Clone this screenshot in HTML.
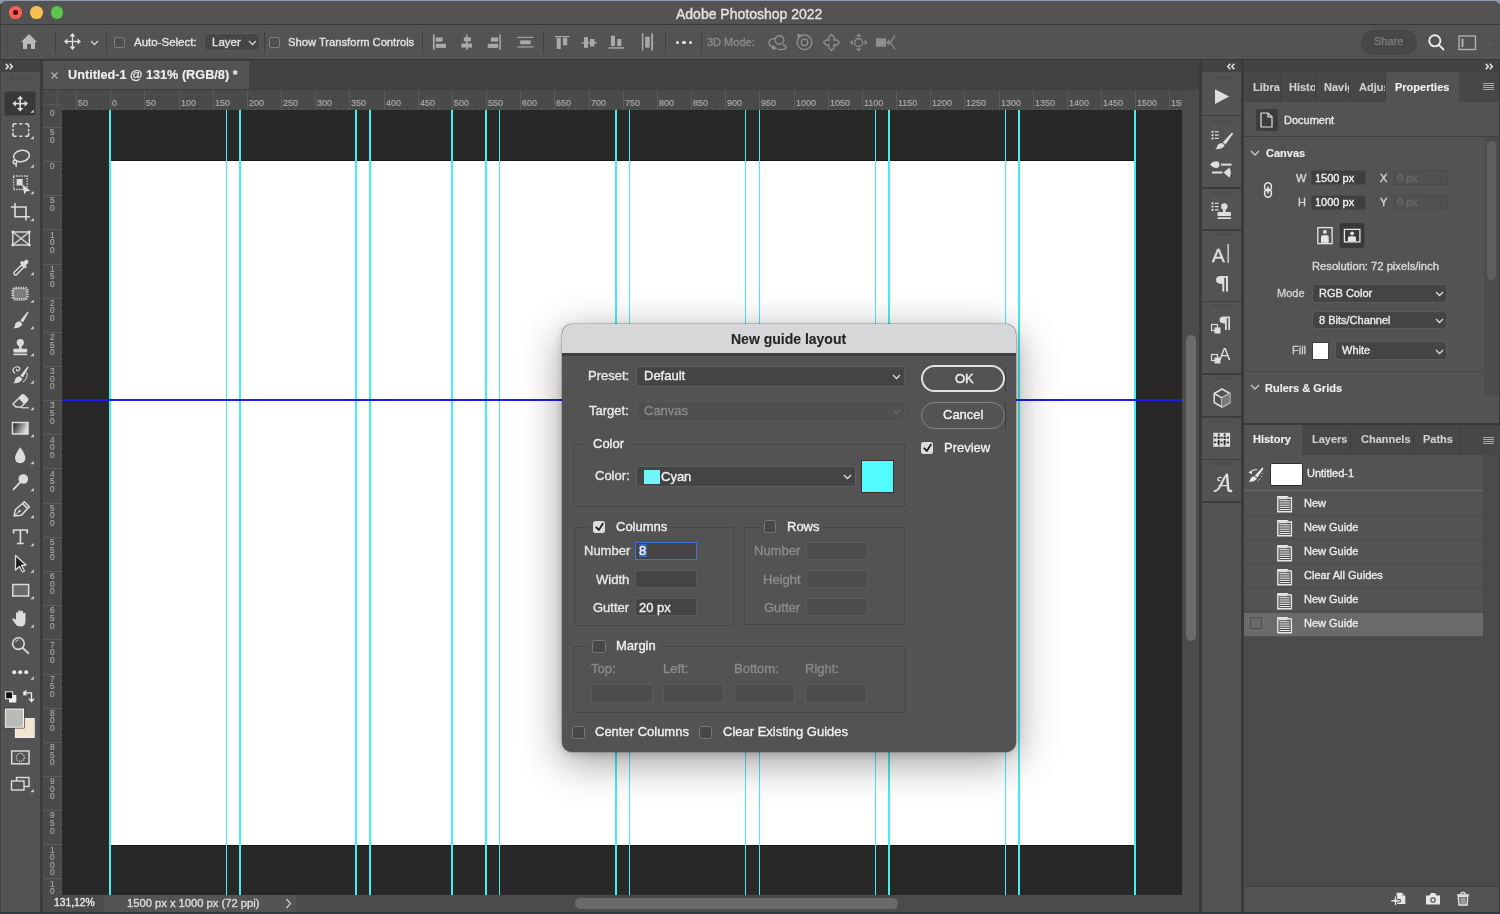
<!DOCTYPE html><html><head><meta charset="utf-8"><style>
*{box-sizing:border-box;margin:0;padding:0}
html,body{width:1500px;height:914px;overflow:hidden}
body{background:#2b3a43;font-family:"Liberation Sans", sans-serif;position:relative;color:#e6e6e6}
.a{position:absolute}
.t{position:absolute;white-space:pre;line-height:1;will-change:transform}
svg{position:absolute;overflow:visible}
</style></head><body>
<div class="a" style="left:0px;top:0px;width:1500px;height:4px;background:#8e9bae;"></div><div class="a" style="left:0px;top:1px;width:1500px;height:911px;background:#535353;border-radius:6px 6px 0 0;"></div><div class="a" style="left:0px;top:24px;width:1500px;height:1px;background:#393939;"></div><div class="a" style="left:0px;top:6px;width:1px;height:54px;background:#404040;"></div><div class="a" style="left:9.3px;top:6.2px;width:12.6px;height:12.6px;border-radius:50%;background:#fd5f58"></div><div class="a" style="left:30.2px;top:6.2px;width:12.6px;height:12.6px;border-radius:50%;background:#f6bf4f"></div><div class="a" style="left:50.900000000000006px;top:6.2px;width:12.6px;height:12.6px;border-radius:50%;background:#5bc84b"></div><div class="a" style="left:13.3px;top:10.2px;width:4.6px;height:4.6px;border-radius:50%;background:#4a0202"></div><div class="t" style="left:676.00px;top:6.96px;font-size:14px;color:#e4e4e4;font-weight:400;-webkit-text-stroke:0.35px #e4e4e4;">Adobe Photoshop 2022</div><div class="a" style="left:0px;top:59px;width:1500px;height:1.5px;background:#363636;"></div><div class="a" style="left:6px;top:32px;width:2px;height:21px;background:repeating-linear-gradient(#474747 0 1px,transparent 1px 2px)"></div><div class="a" style="left:55px;top:31px;width:1px;height:23px;background:#404040;"></div><div class="a" style="left:106px;top:31px;width:1px;height:23px;background:#404040;"></div><div class="a" style="left:264px;top:31px;width:1px;height:23px;background:#404040;"></div><div class="a" style="left:422px;top:31px;width:1px;height:23px;background:#404040;"></div><div class="a" style="left:543px;top:31px;width:1px;height:23px;background:#404040;"></div><div class="a" style="left:665px;top:31px;width:1px;height:23px;background:#404040;"></div><div class="a" style="left:701px;top:31px;width:1px;height:23px;background:#404040;"></div><svg style="left:20px;top:33px;" width="18" height="17" viewBox="0 0 18 17"><path d="M9 1 L1 9 L3 9 L3 16 L7 16 L7 11 L11 11 L11 16 L15 16 L15 9 L17 9 Z" fill="#b9b9b9"/></svg><svg style="left:64px;top:33px;" width="17" height="17" viewBox="0 0 17 17"><g stroke="#e0e0e0" stroke-width="1.3" fill="#e0e0e0"><line x1="8.5" y1="2" x2="8.5" y2="15"/><line x1="2" y1="8.5" x2="15" y2="8.5"/></g><g fill="#e0e0e0"><path d="M8.5 0 L11.5 3.5 L5.5 3.5Z"/><path d="M8.5 17 L11.5 13.5 L5.5 13.5Z"/><path d="M0 8.5 L3.5 5.5 L3.5 11.5Z"/><path d="M17 8.5 L13.5 5.5 L13.5 11.5Z"/></g></svg><svg style="left:90px;top:40px;" width="9" height="6" viewBox="0 0 9 6"><path d="M1 1 L4.5 4.5 L8 1" stroke="#d0d0d0" stroke-width="1.3" fill="none"/></svg><div class="a" style="left:114px;top:37px;width:11px;height:11px;background:#4e4e4e;border:1.3px solid #7d7d7d;border-radius:2px;"></div><div class="t" style="left:133.50px;top:36.65px;font-size:11.5px;color:#e2e2e2;font-weight:400;-webkit-text-stroke:0.35px #e2e2e2;">Auto-Select:</div><div class="a" style="left:204px;top:32.8px;width:56px;height:18.6px;background:#464646;border:1.3px solid #5a5a5a;border-radius:3.5px;"></div><div class="t" style="left:211.50px;top:37.05px;font-size:11.5px;color:#e2e2e2;font-weight:400;-webkit-text-stroke:0.35px #e2e2e2;">Layer</div><svg style="left:248px;top:40px;" width="9" height="6" viewBox="0 0 9 6"><path d="M1 1 L4.5 4.5 L8 1" stroke="#d0d0d0" stroke-width="1.3" fill="none"/></svg><div class="a" style="left:269px;top:37px;width:11px;height:11px;background:#4e4e4e;border:1.3px solid #7d7d7d;border-radius:2px;"></div><div class="t" style="left:288.00px;top:36.68px;font-size:11.2px;color:#e2e2e2;font-weight:400;-webkit-text-stroke:0.35px #e2e2e2;">Show Transform Controls</div><div class="a" style="left:675.7px;top:40.6px;width:3.6px;height:3.6px;border-radius:50%;background:#e8e8e8"></div><div class="a" style="left:682.2px;top:40.6px;width:3.6px;height:3.6px;border-radius:50%;background:#e8e8e8"></div><div class="a" style="left:688.7px;top:40.6px;width:3.6px;height:3.6px;border-radius:50%;background:#e8e8e8"></div><div class="t" style="left:707.30px;top:37.21px;font-size:11px;color:#8b8b8b;font-weight:400;-webkit-text-stroke:0.35px #8b8b8b;">3D Mode:</div><svg style="left:0px;top:0px;" width="1500" height="60" viewBox="0 0 1500 60"><rect x="432.9" y="34.5" width="1.80" height="15.30" fill="#a9a9a9"/><rect x="435.8" y="37.5" width="6.80" height="4.10" fill="#a9a9a9"/><rect x="435.8" y="43.8" width="10.20" height="4.10" fill="#a9a9a9"/><rect x="466" y="34.5" width="1.60" height="15.30" fill="#a9a9a9"/><rect x="463.8" y="37.3" width="7.20" height="4.00" fill="#a9a9a9"/><rect x="461.4" y="43.5" width="10.60" height="4.10" fill="#a9a9a9"/><rect x="499.3" y="34.5" width="1.50" height="15.30" fill="#a9a9a9"/><rect x="491" y="37.5" width="7.20" height="4.10" fill="#a9a9a9"/><rect x="487.7" y="43.8" width="10.50" height="4.10" fill="#a9a9a9"/><rect x="517.2" y="36.8" width="16.50" height="1.10" fill="#a9a9a9"/><rect x="520.2" y="40.4" width="10.50" height="3.90" fill="#a9a9a9"/><rect x="517.2" y="46.3" width="16.50" height="1.20" fill="#a9a9a9"/><rect x="554.9" y="36" width="14.50" height="1.20" fill="#a9a9a9"/><rect x="556.7" y="37.8" width="4.10" height="11.20" fill="#a9a9a9"/><rect x="563" y="37.8" width="4.20" height="7.50" fill="#a9a9a9"/><rect x="581.4" y="42.2" width="15.30" height="1.30" fill="#a9a9a9"/><rect x="584" y="37.1" width="4.00" height="10.80" fill="#a9a9a9"/><rect x="590" y="39" width="4.40" height="7.40" fill="#a9a9a9"/><rect x="608.6" y="47.2" width="15.40" height="1.50" fill="#a9a9a9"/><rect x="610.9" y="35.6" width="4.10" height="10.40" fill="#a9a9a9"/><rect x="617.2" y="39" width="4.10" height="7.00" fill="#a9a9a9"/><rect x="641.9" y="33.4" width="1.50" height="17.10" fill="#a9a9a9"/><rect x="651.2" y="33.4" width="1.90" height="17.10" fill="#a9a9a9"/><rect x="645.2" y="36.7" width="4.50" height="10.90" fill="#a9a9a9"/><g fill="none" stroke="#8e8e8e" stroke-width="1.4"><circle cx="779.5" cy="40" r="4.3"/><path d="M775 38.3 Q768.5 39 769 43.5 Q770 47.3 775.5 47.5" /><path d="M783 44.5 Q786.5 46 785.8 48.2 Q784.5 50 778 49.5"/><circle cx="804.5" cy="42.3" r="7.3"/><circle cx="804.5" cy="42.3" r="3.2"/></g><path d="M772.5 44.8 L777.5 49 L771.8 49.8 Z" fill="#8e8e8e"/><path d="M797 33.8 L801.5 34.5 L798 38.5 Z" fill="#8e8e8e"/><g fill="none" stroke="#8e8e8e" stroke-width="1.3"><path d="M831.5 34.5 L834 37 L834 40 L837 40 L839.5 42.5 L837 45 L834 45 L834 48 L831.5 50.5 L829 48 L829 45 L826 45 L823.5 42.5 L826 40 L829 40 L829 37 Z"/></g><g fill="none" stroke="#8e8e8e" stroke-width="1.3"><circle cx="858.7" cy="42.5" r="4"/></g><g fill="#8e8e8e"><path d="M858.7 33.5 L861.5 36.5 L856 36.5 Z M858.7 51.5 L861.5 48.5 L856 48.5 Z M849.8 42.5 L852.8 39.7 L852.8 45.3 Z M867.6 42.5 L864.6 39.7 L864.6 45.3 Z"/></g><rect x="876" y="38.3" width="10" height="8.4" fill="#8e8e8e"/><path d="M886 42.5 L889.5 39.5 L889.5 45.5 Z" fill="#8e8e8e"/><path d="M895 35.5 L890.5 42.5 L895 49.5" fill="none" stroke="#8e8e8e" stroke-width="1.3"/></svg><div class="a" style="left:1361px;top:29.5px;width:55.5px;height:25px;background:#474747;border-radius:12.5px;"></div><div class="t" style="left:1374.00px;top:36.21px;font-size:11px;color:#7b7b7b;font-weight:400;-webkit-text-stroke:0.35px #7b7b7b;">Share</div><svg style="left:1428px;top:34px;" width="17" height="17" viewBox="0 0 17 17"><circle cx="6.8" cy="6.8" r="5.6" stroke="#ececec" stroke-width="1.9" fill="none"/><line x1="10.8" y1="10.8" x2="15.5" y2="15.5" stroke="#ececec" stroke-width="1.8" stroke-linecap="round"/></svg><svg style="left:1458px;top:35px;" width="19" height="16" viewBox="0 0 19 16"><rect x="1" y="1" width="16.5" height="13.5" stroke="#b0b0b0" stroke-width="1.4" fill="none"/><rect x="3.5" y="3.5" width="2" height="8.5" fill="#b0b0b0"/></svg><svg style="left:1486px;top:41px;" width="8" height="5" viewBox="0 0 8 5"><path d="M1 1 L4 4 L7 1" stroke="#666" stroke-width="1" fill="none"/></svg><div class="a" style="left:0px;top:60px;width:40px;height:12px;background:#434343;"></div><svg style="left:5px;top:63px;" width="9" height="7" viewBox="0 0 9 7"><path d="M0.8 0.8 L3.3 3.5 L0.8 6.2 M4.8 0.8 L7.3 3.5 L4.8 6.2" fill="none" stroke="#e8e8e8" stroke-width="1.5"/></svg><div class="a" style="left:40px;top:60px;width:3px;height:852px;background:#3c3c3c;"></div><div class="a" style="left:0px;top:60px;width:1px;height:852px;background:#444444;"></div><div class="a" style="left:10px;top:77px;width:21px;height:3px;background:repeating-linear-gradient(90deg,#464646 0 1px,transparent 1px 2px)"></div><div class="a" style="left:4.1px;top:90.8px;width:31.8px;height:24.8px;background:#383838;border:1px solid #464646;border-radius:2px;"></div><svg style="left:0;top:0" width="40" height="914" viewBox="0 0 40 914"><g fill="#dcdcdc" stroke="#dcdcdc"><line x1="20.2" y1="97.6" x2="20.2" y2="109.6" stroke-width="1.6"/><line x1="14.2" y1="103.6" x2="26.2" y2="103.6" stroke-width="1.6"/>
<path d="M20.2 95.8 L23.4 99.19999999999999 L17 99.19999999999999 Z M20.2 111.39999999999999 L23.4 108.0 L17 108.0 Z M12.4 103.6 L15.8 100.39999999999999 L15.8 106.8 Z M28 103.6 L24.6 100.39999999999999 L24.6 106.8 Z" stroke="none"/></g><path d="M33.8 112.8 L33.8 109.39999999999999 L30.4 112.8 Z" fill="#cfcfcf"/><g fill="none" stroke="#dcdcdc" stroke-width="1.6"><path d="M13 127.3 L13 125.6 Q13 123.8 14.8 123.8 L16.6 123.8"/><path d="M25 123.8 L26.8 123.8 Q28.6 123.8 28.6 125.6 L28.6 127.3"/><path d="M13 132.8 L13 134.5 Q13 136.3 14.8 136.3 L16.6 136.3"/><path d="M25 136.3 L26.8 136.3 Q28.6 136.3 28.6 134.5 L28.6 132.8"/><path d="M19.2 123.8 L22.4 123.8 M19.2 136.3 L22.4 136.3 M13 129 L13 131.2 M28.6 129 L28.6 131.2"/></g><path d="M33.8 139.2 L33.8 135.8 L30.4 139.2 Z" fill="#cfcfcf"/><ellipse cx="21.5" cy="156" rx="8" ry="5.6" fill="none" stroke="#dcdcdc" stroke-width="1.5" transform="rotate(-12 21.5 156)"/><circle cx="15" cy="162" r="1.8" fill="none" stroke="#dcdcdc" stroke-width="1.4"/><path d="M15.5 163.5 Q17 165.5 16 167" fill="none" stroke="#dcdcdc" stroke-width="1.4"/><path d="M33.8 167.7 L33.8 164.3 L30.4 167.7 Z" fill="#cfcfcf"/><rect x="13.6" y="176" width="13.5" height="13.5" fill="none" stroke="#dcdcdc" stroke-width="1.3" stroke-dasharray="1.4 1.2"/><rect x="16.6" y="179" width="6" height="6.5" fill="#dcdcdc"/><path d="M22 184 L30.5 191 L26.5 191.2 L24.5 194.5 Z" fill="#dcdcdc"/><path d="M33.8 194.2 L33.8 190.8 L30.4 194.2 Z" fill="#cfcfcf"/><path d="M10.8 207 L26 207 L26 220.4 M15 203 L15 216.8 L30 216.8" fill="none" stroke="#dcdcdc" stroke-width="1.6"/><path d="M33.8 221.2 L33.8 217.8 L30.4 221.2 Z" fill="#cfcfcf"/><rect x="12.8" y="232" width="16.5" height="13" fill="none" stroke="#dcdcdc" stroke-width="1.4"/><path d="M12.8 232 L29.3 245 M29.3 232 L12.8 245" stroke="#dcdcdc" stroke-width="1.2"/><g fill="#dcdcdc"><circle cx="12.8" cy="232" r="1.4"/><circle cx="29.3" cy="232" r="1.4"/><circle cx="12.8" cy="245" r="1.4"/><circle cx="29.3" cy="245" r="1.4"/></g><path d="M14 272.5 L21.5 265 L23.8 267.3 L16.3 274.8 Q13.5 275.6 14 272.5 Z" fill="none" stroke="#dcdcdc" stroke-width="1.4"/><path d="M20 263 L25.5 268.5 L27 267 L25.6 265.6 L28.2 263 Q29 260 26 259.5 L23.4 262 L22 260.6 Z" fill="#dcdcdc"/><path d="M33.8 275.2 L33.8 271.8 L30.4 275.2 Z" fill="#cfcfcf"/><rect x="12.8" y="288" width="14.6" height="11.4" rx="3" fill="#7d7d7d" stroke="#dcdcdc" stroke-width="2.6" stroke-dasharray="1.2 1.1"/><path d="M33.8 302.8 L33.8 299.40000000000003 L30.4 302.8 Z" fill="#cfcfcf"/><path d="M27.6 311.6 Q28.6 311.8 28.4 312.8 L22.9 322.6 L20.4 320.6 Z" fill="#dcdcdc"/><path d="M19.9 321.2 Q15.2 321.8 15 325.2 Q14.8 327 13.3 328.2 Q19.6 329 22.4 324.2 Z" fill="#dcdcdc"/><path d="M33.8 329.2 L33.8 325.8 L30.4 329.2 Z" fill="#cfcfcf"/><circle cx="20.3" cy="342.6" r="3.6" fill="#dcdcdc"/><rect x="19" y="345" width="2.6" height="4" fill="#dcdcdc"/><rect x="13.4" y="348.8" width="13.8" height="3.6" rx="0.8" fill="#dcdcdc"/><rect x="13.4" y="353.6" width="13.8" height="1.6" fill="#dcdcdc"/><path d="M33.8 356.2 L33.8 352.8 L30.4 356.2 Z" fill="#cfcfcf"/><path d="M15.2 373.3 Q12.3 371.5 13.2 369 Q14.5 366.5 17.8 366.8 Q20.5 367.3 19.5 369.8 Q18.5 371.5 16.8 370.6 Q16 369.6 17.2 369.1" fill="none" stroke="#dcdcdc" stroke-width="1.2"/><path d="M27.6 366.6 Q28.6 366.8 28.4 367.8 L22.9 377.6 L20.4 375.6 Z" fill="#dcdcdc"/><path d="M19.9 376.2 Q15.2 376.8 15 380.2 Q14.8 382 13.3 383.2 Q19.6 384 22.4 379.2 Z" fill="#dcdcdc"/><path d="M26.8 372.5 Q28.3 378.3 22.8 382.3" fill="none" stroke="#dcdcdc" stroke-width="1"/><path d="M33.8 383.7 L33.8 380.3 L30.4 383.7 Z" fill="#cfcfcf"/><path d="M13 404 L21.5 395.5 Q23 394 24.5 395.5 L27 398 Q28.5 399.5 27 401 L21 407 L16 407 Z" fill="none" stroke="#dcdcdc" stroke-width="1.4"/><path d="M21.5 395.5 Q23 394 24.5 395.5 L27 398 Q28.5 399.5 27 401 L24 404 L18.5 398.5 Z" fill="#dcdcdc"/><line x1="21" y1="407.8" x2="28.8" y2="407.8" stroke="#dcdcdc" stroke-width="1.2"/><path d="M33.8 410.2 L33.8 406.8 L30.4 410.2 Z" fill="#cfcfcf"/><defs><linearGradient id="gr" x1="0" y1="0" x2="1" y2="0.4"><stop offset="0" stop-color="#111"/><stop offset="1" stop-color="#ddd"/></linearGradient></defs><rect x="12.5" y="422.5" width="15.5" height="11.5" fill="url(#gr)" stroke="#dcdcdc" stroke-width="1.5"/><path d="M33.8 437.2 L33.8 433.8 L30.4 437.2 Z" fill="#cfcfcf"/><path d="M20.2 447.3 Q15 454.5 15 457.8 Q15 463.2 20.2 463.2 Q25.4 463.2 25.4 457.8 Q25.4 454.5 20.2 447.3 Z" fill="#dcdcdc"/><path d="M33.8 464.2 L33.8 460.8 L30.4 464.2 Z" fill="#cfcfcf"/><circle cx="23.3" cy="479" r="4.8" fill="#dcdcdc"/><line x1="19.8" y1="482.6" x2="13.5" y2="489.4" stroke="#dcdcdc" stroke-width="1.8" stroke-linecap="round"/><path d="M33.8 491.2 L33.8 487.8 L30.4 491.2 Z" fill="#cfcfcf"/><path d="M14 516 L15.5 509.5 L22.5 503.5 L27.5 508.5 L21.5 515.2 Z" fill="none" stroke="#dcdcdc" stroke-width="1.5" stroke-linejoin="round"/><path d="M22.5 503.5 L24.3 501.7 L29.3 506.7 L27.5 508.5" fill="none" stroke="#dcdcdc" stroke-width="1.5"/><circle cx="19.5" cy="511" r="1.2" fill="#dcdcdc"/><line x1="14" y1="516" x2="19" y2="511.5" stroke="#dcdcdc" stroke-width="1"/><path d="M33.8 518.2 L33.8 514.8 L30.4 518.2 Z" fill="#cfcfcf"/><path d="M13.6 533.5 L13.6 530 L27.2 530 L27.2 533.5 M20.4 530 L20.4 543.5 M17 543.5 L23.8 543.5" fill="none" stroke="#dcdcdc" stroke-width="1.7"/><path d="M33.8 546.2 L33.8 542.8 L30.4 546.2 Z" fill="#cfcfcf"/><path d="M15.5 555.5 L26 565 L21.5 565.5 L24.5 571 L22.5 572 L19.5 566.5 L15.5 570 Z" fill="#1e1e1e" stroke="#dcdcdc" stroke-width="1.3" stroke-linejoin="round"/><path d="M33.8 572.7 L33.8 569.3 L30.4 572.7 Z" fill="#cfcfcf"/><rect x="12.8" y="584.5" width="15.8" height="11.5" fill="#6a6a6a" stroke="#dcdcdc" stroke-width="1.5"/><path d="M33.8 599.2 L33.8 595.8 L30.4 599.2 Z" fill="#cfcfcf"/><path d="M16 620 L16 613.5 Q16 612.2 17.2 612.2 Q18.3 612.2 18.3 613.5 L18.3 618 L18.3 611.5 Q18.3 610.3 19.5 610.3 Q20.7 610.3 20.7 611.5 L20.7 618 L20.7 612 Q20.7 610.8 21.9 610.8 Q23.1 610.8 23.1 612 L23.1 618.5 L23.1 614 Q23.1 612.8 24.3 612.8 Q25.5 612.8 25.5 614 L25.5 621 Q25.5 626.5 20.5 626.5 Q17 626.5 15.5 624 L12.5 619.8 Q12 618.5 13.2 618.3 Q14.5 618.2 16 620 Z" fill="#dcdcdc"/><path d="M33.8 627.7 L33.8 624.3 L30.4 627.7 Z" fill="#cfcfcf"/><circle cx="18.4" cy="643.6" r="5.8" fill="none" stroke="#dcdcdc" stroke-width="1.6"/><line x1="22.6" y1="647.8" x2="28.3" y2="653.2" stroke="#dcdcdc" stroke-width="1.8" stroke-linecap="round"/><path d="M15.5 642 Q16.5 640 18.6 639.8" fill="none" stroke="#dcdcdc" stroke-width="1"/><g fill="#e8e8e8"><circle cx="14.2" cy="672.3" r="2"/><circle cx="20.2" cy="672.3" r="2"/><circle cx="26.2" cy="672.3" r="2"/></g><path d="M33.8 679.7 L33.8 676.3 L30.4 679.7 Z" fill="#cfcfcf"/><rect x="9" y="695" width="7.3" height="7.5" fill="#f0f0f0"/><rect x="5.6" y="691.8" width="7" height="7" fill="#111" stroke="#f0f0f0" stroke-width="1"/><path d="M24 695.5 L24 692.8 L31.5 692.8 L31.5 701 M29 698.6 L31.5 701.6 L34 698.6 M26.5 690.5 L23.6 692.8 L26.5 695.2" fill="none" stroke="#f0f0f0" stroke-width="1.3"/><rect x="15" y="718.2" width="19.6" height="19.6" fill="#f2e5d0" stroke="#f4f4f4" stroke-width="1.4"/><rect x="14.5" y="717.7" width="20.6" height="20.6" fill="none" stroke="#222" stroke-width="0.6"/><rect x="5" y="708.8" width="18.6" height="18.6" fill="#b9bbb6" stroke="#f4f4f4" stroke-width="1.4"/><rect x="4.3" y="708.1" width="20" height="20" fill="none" stroke="#222" stroke-width="0.6"/><rect x="11.7" y="751" width="17.3" height="12.8" fill="none" stroke="#dcdcdc" stroke-width="1.5"/><circle cx="20.3" cy="757.4" r="4" fill="none" stroke="#dcdcdc" stroke-width="1.2" stroke-dasharray="1.2 1"/><rect x="16.5" y="777.5" width="12.5" height="9" fill="#535353" stroke="#dcdcdc" stroke-width="1.4"/><rect x="11.5" y="781" width="12.5" height="9" fill="#535353" stroke="#dcdcdc" stroke-width="1.4"/><path d="M33.8 792.2 L33.8 788.8 L30.4 792.2 Z" fill="#cfcfcf"/></svg><div class="a" style="left:43px;top:60px;width:1156px;height:30px;background:#424242;"></div><div class="a" style="left:43px;top:61px;width:205.5px;height:28.3px;background:#535353;"></div><div class="a" style="left:43px;top:89.2px;width:1139px;height:1.2px;background:#3d3d3d;"></div><svg style="left:50.5px;top:72px;" width="7" height="7" viewBox="0 0 7 7"><path d="M0.5 0.5 L6.5 6.5 M6.5 0.5 L0.5 6.5" stroke="#b5b5b5" stroke-width="1.1"/></svg><div class="t" style="left:67.80px;top:68.81px;font-size:12.7px;color:#f0f0f0;font-weight:700;-webkit-text-stroke:0.12px #f0f0f0;">Untitled-1 @ 131% (RGB/8) *</div><div class="a" style="left:43px;top:90px;width:1139px;height:20px;background:#4a4a4a;"></div><div class="a" style="left:43px;top:110px;width:19px;height:785px;background:#4a4a4a;"></div><div class="a" style="left:62px;top:110px;width:1120px;height:785px;background:#282828;"></div><div class="a" style="left:109px;top:160px;width:1027px;height:686px;background:#181818;"></div><div class="a" style="left:110px;top:161px;width:1025px;height:684px;background:#ffffff;"></div><div class="a" style="left:76px;top:90px;width:1px;height:20px;background:#5b5b5b;"></div><div class="t" style="left:78.00px;top:97.84px;font-size:9px;color:#acacac;font-weight:400;-webkit-text-stroke:0.15px #acacac;transform:scaleY(1.1);transform-origin:0 0;">50</div><div class="a" style="left:110px;top:90px;width:1px;height:20px;background:#5b5b5b;"></div><div class="t" style="left:112.00px;top:97.84px;font-size:9px;color:#acacac;font-weight:400;-webkit-text-stroke:0.15px #acacac;transform:scaleY(1.1);transform-origin:0 0;">0</div><div class="a" style="left:144px;top:90px;width:1px;height:20px;background:#5b5b5b;"></div><div class="t" style="left:146.00px;top:97.84px;font-size:9px;color:#acacac;font-weight:400;-webkit-text-stroke:0.15px #acacac;transform:scaleY(1.1);transform-origin:0 0;">50</div><div class="a" style="left:179px;top:90px;width:1px;height:20px;background:#5b5b5b;"></div><div class="t" style="left:181.00px;top:97.84px;font-size:9px;color:#acacac;font-weight:400;-webkit-text-stroke:0.15px #acacac;transform:scaleY(1.1);transform-origin:0 0;">100</div><div class="a" style="left:213px;top:90px;width:1px;height:20px;background:#5b5b5b;"></div><div class="t" style="left:215.00px;top:97.84px;font-size:9px;color:#acacac;font-weight:400;-webkit-text-stroke:0.15px #acacac;transform:scaleY(1.1);transform-origin:0 0;">150</div><div class="a" style="left:247px;top:90px;width:1px;height:20px;background:#5b5b5b;"></div><div class="t" style="left:249.00px;top:97.84px;font-size:9px;color:#acacac;font-weight:400;-webkit-text-stroke:0.15px #acacac;transform:scaleY(1.1);transform-origin:0 0;">200</div><div class="a" style="left:281px;top:90px;width:1px;height:20px;background:#5b5b5b;"></div><div class="t" style="left:283.00px;top:97.84px;font-size:9px;color:#acacac;font-weight:400;-webkit-text-stroke:0.15px #acacac;transform:scaleY(1.1);transform-origin:0 0;">250</div><div class="a" style="left:315px;top:90px;width:1px;height:20px;background:#5b5b5b;"></div><div class="t" style="left:317.00px;top:97.84px;font-size:9px;color:#acacac;font-weight:400;-webkit-text-stroke:0.15px #acacac;transform:scaleY(1.1);transform-origin:0 0;">300</div><div class="a" style="left:349px;top:90px;width:1px;height:20px;background:#5b5b5b;"></div><div class="t" style="left:351.00px;top:97.84px;font-size:9px;color:#acacac;font-weight:400;-webkit-text-stroke:0.15px #acacac;transform:scaleY(1.1);transform-origin:0 0;">350</div><div class="a" style="left:384px;top:90px;width:1px;height:20px;background:#5b5b5b;"></div><div class="t" style="left:386.00px;top:97.84px;font-size:9px;color:#acacac;font-weight:400;-webkit-text-stroke:0.15px #acacac;transform:scaleY(1.1);transform-origin:0 0;">400</div><div class="a" style="left:418px;top:90px;width:1px;height:20px;background:#5b5b5b;"></div><div class="t" style="left:420.00px;top:97.84px;font-size:9px;color:#acacac;font-weight:400;-webkit-text-stroke:0.15px #acacac;transform:scaleY(1.1);transform-origin:0 0;">450</div><div class="a" style="left:452px;top:90px;width:1px;height:20px;background:#5b5b5b;"></div><div class="t" style="left:454.00px;top:97.84px;font-size:9px;color:#acacac;font-weight:400;-webkit-text-stroke:0.15px #acacac;transform:scaleY(1.1);transform-origin:0 0;">500</div><div class="a" style="left:486px;top:90px;width:1px;height:20px;background:#5b5b5b;"></div><div class="t" style="left:488.00px;top:97.84px;font-size:9px;color:#acacac;font-weight:400;-webkit-text-stroke:0.15px #acacac;transform:scaleY(1.1);transform-origin:0 0;">550</div><div class="a" style="left:520px;top:90px;width:1px;height:20px;background:#5b5b5b;"></div><div class="t" style="left:522.00px;top:97.84px;font-size:9px;color:#acacac;font-weight:400;-webkit-text-stroke:0.15px #acacac;transform:scaleY(1.1);transform-origin:0 0;">600</div><div class="a" style="left:554px;top:90px;width:1px;height:20px;background:#5b5b5b;"></div><div class="t" style="left:556.00px;top:97.84px;font-size:9px;color:#acacac;font-weight:400;-webkit-text-stroke:0.15px #acacac;transform:scaleY(1.1);transform-origin:0 0;">650</div><div class="a" style="left:589px;top:90px;width:1px;height:20px;background:#5b5b5b;"></div><div class="t" style="left:591.00px;top:97.84px;font-size:9px;color:#acacac;font-weight:400;-webkit-text-stroke:0.15px #acacac;transform:scaleY(1.1);transform-origin:0 0;">700</div><div class="a" style="left:623px;top:90px;width:1px;height:20px;background:#5b5b5b;"></div><div class="t" style="left:625.00px;top:97.84px;font-size:9px;color:#acacac;font-weight:400;-webkit-text-stroke:0.15px #acacac;transform:scaleY(1.1);transform-origin:0 0;">750</div><div class="a" style="left:657px;top:90px;width:1px;height:20px;background:#5b5b5b;"></div><div class="t" style="left:659.00px;top:97.84px;font-size:9px;color:#acacac;font-weight:400;-webkit-text-stroke:0.15px #acacac;transform:scaleY(1.1);transform-origin:0 0;">800</div><div class="a" style="left:691px;top:90px;width:1px;height:20px;background:#5b5b5b;"></div><div class="t" style="left:693.00px;top:97.84px;font-size:9px;color:#acacac;font-weight:400;-webkit-text-stroke:0.15px #acacac;transform:scaleY(1.1);transform-origin:0 0;">850</div><div class="a" style="left:725px;top:90px;width:1px;height:20px;background:#5b5b5b;"></div><div class="t" style="left:727.00px;top:97.84px;font-size:9px;color:#acacac;font-weight:400;-webkit-text-stroke:0.15px #acacac;transform:scaleY(1.1);transform-origin:0 0;">900</div><div class="a" style="left:759px;top:90px;width:1px;height:20px;background:#5b5b5b;"></div><div class="t" style="left:761.00px;top:97.84px;font-size:9px;color:#acacac;font-weight:400;-webkit-text-stroke:0.15px #acacac;transform:scaleY(1.1);transform-origin:0 0;">950</div><div class="a" style="left:794px;top:90px;width:1px;height:20px;background:#5b5b5b;"></div><div class="t" style="left:796.00px;top:97.84px;font-size:9px;color:#acacac;font-weight:400;-webkit-text-stroke:0.15px #acacac;transform:scaleY(1.1);transform-origin:0 0;">1000</div><div class="a" style="left:828px;top:90px;width:1px;height:20px;background:#5b5b5b;"></div><div class="t" style="left:830.00px;top:97.84px;font-size:9px;color:#acacac;font-weight:400;-webkit-text-stroke:0.15px #acacac;transform:scaleY(1.1);transform-origin:0 0;">1050</div><div class="a" style="left:862px;top:90px;width:1px;height:20px;background:#5b5b5b;"></div><div class="t" style="left:864.00px;top:97.84px;font-size:9px;color:#acacac;font-weight:400;-webkit-text-stroke:0.15px #acacac;transform:scaleY(1.1);transform-origin:0 0;">1100</div><div class="a" style="left:896px;top:90px;width:1px;height:20px;background:#5b5b5b;"></div><div class="t" style="left:898.00px;top:97.84px;font-size:9px;color:#acacac;font-weight:400;-webkit-text-stroke:0.15px #acacac;transform:scaleY(1.1);transform-origin:0 0;">1150</div><div class="a" style="left:930px;top:90px;width:1px;height:20px;background:#5b5b5b;"></div><div class="t" style="left:932.00px;top:97.84px;font-size:9px;color:#acacac;font-weight:400;-webkit-text-stroke:0.15px #acacac;transform:scaleY(1.1);transform-origin:0 0;">1200</div><div class="a" style="left:964px;top:90px;width:1px;height:20px;background:#5b5b5b;"></div><div class="t" style="left:966.00px;top:97.84px;font-size:9px;color:#acacac;font-weight:400;-webkit-text-stroke:0.15px #acacac;transform:scaleY(1.1);transform-origin:0 0;">1250</div><div class="a" style="left:999px;top:90px;width:1px;height:20px;background:#5b5b5b;"></div><div class="t" style="left:1001.00px;top:97.84px;font-size:9px;color:#acacac;font-weight:400;-webkit-text-stroke:0.15px #acacac;transform:scaleY(1.1);transform-origin:0 0;">1300</div><div class="a" style="left:1033px;top:90px;width:1px;height:20px;background:#5b5b5b;"></div><div class="t" style="left:1035.00px;top:97.84px;font-size:9px;color:#acacac;font-weight:400;-webkit-text-stroke:0.15px #acacac;transform:scaleY(1.1);transform-origin:0 0;">1350</div><div class="a" style="left:1067px;top:90px;width:1px;height:20px;background:#5b5b5b;"></div><div class="t" style="left:1069.00px;top:97.84px;font-size:9px;color:#acacac;font-weight:400;-webkit-text-stroke:0.15px #acacac;transform:scaleY(1.1);transform-origin:0 0;">1400</div><div class="a" style="left:1101px;top:90px;width:1px;height:20px;background:#5b5b5b;"></div><div class="t" style="left:1103.00px;top:97.84px;font-size:9px;color:#acacac;font-weight:400;-webkit-text-stroke:0.15px #acacac;transform:scaleY(1.1);transform-origin:0 0;">1450</div><div class="a" style="left:1135px;top:90px;width:1px;height:20px;background:#5b5b5b;"></div><div class="t" style="left:1137.00px;top:97.84px;font-size:9px;color:#acacac;font-weight:400;-webkit-text-stroke:0.15px #acacac;transform:scaleY(1.1);transform-origin:0 0;">1500</div><div class="a" style="left:1169px;top:90px;width:1px;height:20px;background:#5b5b5b;"></div><div class="t" style="left:1171.00px;top:97.84px;font-size:9px;color:#acacac;font-weight:400;-webkit-text-stroke:0.15px #acacac;transform:scaleY(1.1);transform-origin:0 0;">1550</div><svg style="left:0px;top:0px;" width="1500" height="914" viewBox="0 0 1500 914"><rect x="62" y="108.3" width="1" height="1.7" fill="#5e5e5e"/><rect x="69" y="108.3" width="1" height="1.7" fill="#5e5e5e"/><rect x="83" y="108.3" width="1" height="1.7" fill="#5e5e5e"/><rect x="90" y="108.3" width="1" height="1.7" fill="#5e5e5e"/><rect x="97" y="108.3" width="1" height="1.7" fill="#5e5e5e"/><rect x="103" y="108.3" width="1" height="1.7" fill="#5e5e5e"/><rect x="117" y="108.3" width="1" height="1.7" fill="#5e5e5e"/><rect x="124" y="108.3" width="1" height="1.7" fill="#5e5e5e"/><rect x="131" y="108.3" width="1" height="1.7" fill="#5e5e5e"/><rect x="138" y="108.3" width="1" height="1.7" fill="#5e5e5e"/><rect x="151" y="108.3" width="1" height="1.7" fill="#5e5e5e"/><rect x="158" y="108.3" width="1" height="1.7" fill="#5e5e5e"/><rect x="165" y="108.3" width="1" height="1.7" fill="#5e5e5e"/><rect x="172" y="108.3" width="1" height="1.7" fill="#5e5e5e"/><rect x="185" y="108.3" width="1" height="1.7" fill="#5e5e5e"/><rect x="192" y="108.3" width="1" height="1.7" fill="#5e5e5e"/><rect x="199" y="108.3" width="1" height="1.7" fill="#5e5e5e"/><rect x="206" y="108.3" width="1" height="1.7" fill="#5e5e5e"/><rect x="220" y="108.3" width="1" height="1.7" fill="#5e5e5e"/><rect x="226" y="108.3" width="1" height="1.7" fill="#5e5e5e"/><rect x="233" y="108.3" width="1" height="1.7" fill="#5e5e5e"/><rect x="240" y="108.3" width="1" height="1.7" fill="#5e5e5e"/><rect x="254" y="108.3" width="1" height="1.7" fill="#5e5e5e"/><rect x="261" y="108.3" width="1" height="1.7" fill="#5e5e5e"/><rect x="267" y="108.3" width="1" height="1.7" fill="#5e5e5e"/><rect x="274" y="108.3" width="1" height="1.7" fill="#5e5e5e"/><rect x="288" y="108.3" width="1" height="1.7" fill="#5e5e5e"/><rect x="295" y="108.3" width="1" height="1.7" fill="#5e5e5e"/><rect x="302" y="108.3" width="1" height="1.7" fill="#5e5e5e"/><rect x="308" y="108.3" width="1" height="1.7" fill="#5e5e5e"/><rect x="322" y="108.3" width="1" height="1.7" fill="#5e5e5e"/><rect x="329" y="108.3" width="1" height="1.7" fill="#5e5e5e"/><rect x="336" y="108.3" width="1" height="1.7" fill="#5e5e5e"/><rect x="343" y="108.3" width="1" height="1.7" fill="#5e5e5e"/><rect x="356" y="108.3" width="1" height="1.7" fill="#5e5e5e"/><rect x="363" y="108.3" width="1" height="1.7" fill="#5e5e5e"/><rect x="370" y="108.3" width="1" height="1.7" fill="#5e5e5e"/><rect x="377" y="108.3" width="1" height="1.7" fill="#5e5e5e"/><rect x="390" y="108.3" width="1" height="1.7" fill="#5e5e5e"/><rect x="397" y="108.3" width="1" height="1.7" fill="#5e5e5e"/><rect x="404" y="108.3" width="1" height="1.7" fill="#5e5e5e"/><rect x="411" y="108.3" width="1" height="1.7" fill="#5e5e5e"/><rect x="425" y="108.3" width="1" height="1.7" fill="#5e5e5e"/><rect x="431" y="108.3" width="1" height="1.7" fill="#5e5e5e"/><rect x="438" y="108.3" width="1" height="1.7" fill="#5e5e5e"/><rect x="445" y="108.3" width="1" height="1.7" fill="#5e5e5e"/><rect x="459" y="108.3" width="1" height="1.7" fill="#5e5e5e"/><rect x="466" y="108.3" width="1" height="1.7" fill="#5e5e5e"/><rect x="472" y="108.3" width="1" height="1.7" fill="#5e5e5e"/><rect x="479" y="108.3" width="1" height="1.7" fill="#5e5e5e"/><rect x="493" y="108.3" width="1" height="1.7" fill="#5e5e5e"/><rect x="500" y="108.3" width="1" height="1.7" fill="#5e5e5e"/><rect x="507" y="108.3" width="1" height="1.7" fill="#5e5e5e"/><rect x="513" y="108.3" width="1" height="1.7" fill="#5e5e5e"/><rect x="527" y="108.3" width="1" height="1.7" fill="#5e5e5e"/><rect x="534" y="108.3" width="1" height="1.7" fill="#5e5e5e"/><rect x="541" y="108.3" width="1" height="1.7" fill="#5e5e5e"/><rect x="548" y="108.3" width="1" height="1.7" fill="#5e5e5e"/><rect x="561" y="108.3" width="1" height="1.7" fill="#5e5e5e"/><rect x="568" y="108.3" width="1" height="1.7" fill="#5e5e5e"/><rect x="575" y="108.3" width="1" height="1.7" fill="#5e5e5e"/><rect x="582" y="108.3" width="1" height="1.7" fill="#5e5e5e"/><rect x="595" y="108.3" width="1" height="1.7" fill="#5e5e5e"/><rect x="602" y="108.3" width="1" height="1.7" fill="#5e5e5e"/><rect x="609" y="108.3" width="1" height="1.7" fill="#5e5e5e"/><rect x="616" y="108.3" width="1" height="1.7" fill="#5e5e5e"/><rect x="630" y="108.3" width="1" height="1.7" fill="#5e5e5e"/><rect x="636" y="108.3" width="1" height="1.7" fill="#5e5e5e"/><rect x="643" y="108.3" width="1" height="1.7" fill="#5e5e5e"/><rect x="650" y="108.3" width="1" height="1.7" fill="#5e5e5e"/><rect x="664" y="108.3" width="1" height="1.7" fill="#5e5e5e"/><rect x="671" y="108.3" width="1" height="1.7" fill="#5e5e5e"/><rect x="677" y="108.3" width="1" height="1.7" fill="#5e5e5e"/><rect x="684" y="108.3" width="1" height="1.7" fill="#5e5e5e"/><rect x="698" y="108.3" width="1" height="1.7" fill="#5e5e5e"/><rect x="705" y="108.3" width="1" height="1.7" fill="#5e5e5e"/><rect x="712" y="108.3" width="1" height="1.7" fill="#5e5e5e"/><rect x="718" y="108.3" width="1" height="1.7" fill="#5e5e5e"/><rect x="732" y="108.3" width="1" height="1.7" fill="#5e5e5e"/><rect x="739" y="108.3" width="1" height="1.7" fill="#5e5e5e"/><rect x="746" y="108.3" width="1" height="1.7" fill="#5e5e5e"/><rect x="753" y="108.3" width="1" height="1.7" fill="#5e5e5e"/><rect x="766" y="108.3" width="1" height="1.7" fill="#5e5e5e"/><rect x="773" y="108.3" width="1" height="1.7" fill="#5e5e5e"/><rect x="780" y="108.3" width="1" height="1.7" fill="#5e5e5e"/><rect x="787" y="108.3" width="1" height="1.7" fill="#5e5e5e"/><rect x="800" y="108.3" width="1" height="1.7" fill="#5e5e5e"/><rect x="807" y="108.3" width="1" height="1.7" fill="#5e5e5e"/><rect x="814" y="108.3" width="1" height="1.7" fill="#5e5e5e"/><rect x="821" y="108.3" width="1" height="1.7" fill="#5e5e5e"/><rect x="835" y="108.3" width="1" height="1.7" fill="#5e5e5e"/><rect x="841" y="108.3" width="1" height="1.7" fill="#5e5e5e"/><rect x="848" y="108.3" width="1" height="1.7" fill="#5e5e5e"/><rect x="855" y="108.3" width="1" height="1.7" fill="#5e5e5e"/><rect x="869" y="108.3" width="1" height="1.7" fill="#5e5e5e"/><rect x="876" y="108.3" width="1" height="1.7" fill="#5e5e5e"/><rect x="882" y="108.3" width="1" height="1.7" fill="#5e5e5e"/><rect x="889" y="108.3" width="1" height="1.7" fill="#5e5e5e"/><rect x="903" y="108.3" width="1" height="1.7" fill="#5e5e5e"/><rect x="910" y="108.3" width="1" height="1.7" fill="#5e5e5e"/><rect x="917" y="108.3" width="1" height="1.7" fill="#5e5e5e"/><rect x="923" y="108.3" width="1" height="1.7" fill="#5e5e5e"/><rect x="937" y="108.3" width="1" height="1.7" fill="#5e5e5e"/><rect x="944" y="108.3" width="1" height="1.7" fill="#5e5e5e"/><rect x="951" y="108.3" width="1" height="1.7" fill="#5e5e5e"/><rect x="958" y="108.3" width="1" height="1.7" fill="#5e5e5e"/><rect x="971" y="108.3" width="1" height="1.7" fill="#5e5e5e"/><rect x="978" y="108.3" width="1" height="1.7" fill="#5e5e5e"/><rect x="985" y="108.3" width="1" height="1.7" fill="#5e5e5e"/><rect x="992" y="108.3" width="1" height="1.7" fill="#5e5e5e"/><rect x="1005" y="108.3" width="1" height="1.7" fill="#5e5e5e"/><rect x="1012" y="108.3" width="1" height="1.7" fill="#5e5e5e"/><rect x="1019" y="108.3" width="1" height="1.7" fill="#5e5e5e"/><rect x="1026" y="108.3" width="1" height="1.7" fill="#5e5e5e"/><rect x="1040" y="108.3" width="1" height="1.7" fill="#5e5e5e"/><rect x="1046" y="108.3" width="1" height="1.7" fill="#5e5e5e"/><rect x="1053" y="108.3" width="1" height="1.7" fill="#5e5e5e"/><rect x="1060" y="108.3" width="1" height="1.7" fill="#5e5e5e"/><rect x="1074" y="108.3" width="1" height="1.7" fill="#5e5e5e"/><rect x="1081" y="108.3" width="1" height="1.7" fill="#5e5e5e"/><rect x="1087" y="108.3" width="1" height="1.7" fill="#5e5e5e"/><rect x="1094" y="108.3" width="1" height="1.7" fill="#5e5e5e"/><rect x="1108" y="108.3" width="1" height="1.7" fill="#5e5e5e"/><rect x="1115" y="108.3" width="1" height="1.7" fill="#5e5e5e"/><rect x="1122" y="108.3" width="1" height="1.7" fill="#5e5e5e"/><rect x="1128" y="108.3" width="1" height="1.7" fill="#5e5e5e"/><rect x="1142" y="108.3" width="1" height="1.7" fill="#5e5e5e"/><rect x="1149" y="108.3" width="1" height="1.7" fill="#5e5e5e"/><rect x="1156" y="108.3" width="1" height="1.7" fill="#5e5e5e"/><rect x="1163" y="108.3" width="1" height="1.7" fill="#5e5e5e"/><rect x="1176" y="108.3" width="1" height="1.7" fill="#5e5e5e"/><rect x="60.3" y="113" width="1.7" height="1" fill="#5e5e5e"/><rect x="60.3" y="120" width="1.7" height="1" fill="#5e5e5e"/><rect x="60.3" y="134" width="1.7" height="1" fill="#5e5e5e"/><rect x="60.3" y="140" width="1.7" height="1" fill="#5e5e5e"/><rect x="60.3" y="147" width="1.7" height="1" fill="#5e5e5e"/><rect x="60.3" y="154" width="1.7" height="1" fill="#5e5e5e"/><rect x="60.3" y="168" width="1.7" height="1" fill="#5e5e5e"/><rect x="60.3" y="175" width="1.7" height="1" fill="#5e5e5e"/><rect x="60.3" y="182" width="1.7" height="1" fill="#5e5e5e"/><rect x="60.3" y="188" width="1.7" height="1" fill="#5e5e5e"/><rect x="60.3" y="202" width="1.7" height="1" fill="#5e5e5e"/><rect x="60.3" y="209" width="1.7" height="1" fill="#5e5e5e"/><rect x="60.3" y="216" width="1.7" height="1" fill="#5e5e5e"/><rect x="60.3" y="222" width="1.7" height="1" fill="#5e5e5e"/><rect x="60.3" y="236" width="1.7" height="1" fill="#5e5e5e"/><rect x="60.3" y="243" width="1.7" height="1" fill="#5e5e5e"/><rect x="60.3" y="250" width="1.7" height="1" fill="#5e5e5e"/><rect x="60.3" y="257" width="1.7" height="1" fill="#5e5e5e"/><rect x="60.3" y="270" width="1.7" height="1" fill="#5e5e5e"/><rect x="60.3" y="277" width="1.7" height="1" fill="#5e5e5e"/><rect x="60.3" y="284" width="1.7" height="1" fill="#5e5e5e"/><rect x="60.3" y="291" width="1.7" height="1" fill="#5e5e5e"/><rect x="60.3" y="304" width="1.7" height="1" fill="#5e5e5e"/><rect x="60.3" y="311" width="1.7" height="1" fill="#5e5e5e"/><rect x="60.3" y="318" width="1.7" height="1" fill="#5e5e5e"/><rect x="60.3" y="325" width="1.7" height="1" fill="#5e5e5e"/><rect x="60.3" y="339" width="1.7" height="1" fill="#5e5e5e"/><rect x="60.3" y="346" width="1.7" height="1" fill="#5e5e5e"/><rect x="60.3" y="352" width="1.7" height="1" fill="#5e5e5e"/><rect x="60.3" y="359" width="1.7" height="1" fill="#5e5e5e"/><rect x="60.3" y="373" width="1.7" height="1" fill="#5e5e5e"/><rect x="60.3" y="380" width="1.7" height="1" fill="#5e5e5e"/><rect x="60.3" y="386" width="1.7" height="1" fill="#5e5e5e"/><rect x="60.3" y="393" width="1.7" height="1" fill="#5e5e5e"/><rect x="60.3" y="407" width="1.7" height="1" fill="#5e5e5e"/><rect x="60.3" y="414" width="1.7" height="1" fill="#5e5e5e"/><rect x="60.3" y="421" width="1.7" height="1" fill="#5e5e5e"/><rect x="60.3" y="428" width="1.7" height="1" fill="#5e5e5e"/><rect x="60.3" y="441" width="1.7" height="1" fill="#5e5e5e"/><rect x="60.3" y="448" width="1.7" height="1" fill="#5e5e5e"/><rect x="60.3" y="455" width="1.7" height="1" fill="#5e5e5e"/><rect x="60.3" y="462" width="1.7" height="1" fill="#5e5e5e"/><rect x="60.3" y="475" width="1.7" height="1" fill="#5e5e5e"/><rect x="60.3" y="482" width="1.7" height="1" fill="#5e5e5e"/><rect x="60.3" y="489" width="1.7" height="1" fill="#5e5e5e"/><rect x="60.3" y="496" width="1.7" height="1" fill="#5e5e5e"/><rect x="60.3" y="510" width="1.7" height="1" fill="#5e5e5e"/><rect x="60.3" y="516" width="1.7" height="1" fill="#5e5e5e"/><rect x="60.3" y="523" width="1.7" height="1" fill="#5e5e5e"/><rect x="60.3" y="530" width="1.7" height="1" fill="#5e5e5e"/><rect x="60.3" y="544" width="1.7" height="1" fill="#5e5e5e"/><rect x="60.3" y="550" width="1.7" height="1" fill="#5e5e5e"/><rect x="60.3" y="557" width="1.7" height="1" fill="#5e5e5e"/><rect x="60.3" y="564" width="1.7" height="1" fill="#5e5e5e"/><rect x="60.3" y="578" width="1.7" height="1" fill="#5e5e5e"/><rect x="60.3" y="585" width="1.7" height="1" fill="#5e5e5e"/><rect x="60.3" y="592" width="1.7" height="1" fill="#5e5e5e"/><rect x="60.3" y="598" width="1.7" height="1" fill="#5e5e5e"/><rect x="60.3" y="612" width="1.7" height="1" fill="#5e5e5e"/><rect x="60.3" y="619" width="1.7" height="1" fill="#5e5e5e"/><rect x="60.3" y="626" width="1.7" height="1" fill="#5e5e5e"/><rect x="60.3" y="632" width="1.7" height="1" fill="#5e5e5e"/><rect x="60.3" y="646" width="1.7" height="1" fill="#5e5e5e"/><rect x="60.3" y="653" width="1.7" height="1" fill="#5e5e5e"/><rect x="60.3" y="660" width="1.7" height="1" fill="#5e5e5e"/><rect x="60.3" y="667" width="1.7" height="1" fill="#5e5e5e"/><rect x="60.3" y="680" width="1.7" height="1" fill="#5e5e5e"/><rect x="60.3" y="687" width="1.7" height="1" fill="#5e5e5e"/><rect x="60.3" y="694" width="1.7" height="1" fill="#5e5e5e"/><rect x="60.3" y="701" width="1.7" height="1" fill="#5e5e5e"/><rect x="60.3" y="714" width="1.7" height="1" fill="#5e5e5e"/><rect x="60.3" y="721" width="1.7" height="1" fill="#5e5e5e"/><rect x="60.3" y="728" width="1.7" height="1" fill="#5e5e5e"/><rect x="60.3" y="735" width="1.7" height="1" fill="#5e5e5e"/><rect x="60.3" y="749" width="1.7" height="1" fill="#5e5e5e"/><rect x="60.3" y="756" width="1.7" height="1" fill="#5e5e5e"/><rect x="60.3" y="762" width="1.7" height="1" fill="#5e5e5e"/><rect x="60.3" y="769" width="1.7" height="1" fill="#5e5e5e"/><rect x="60.3" y="783" width="1.7" height="1" fill="#5e5e5e"/><rect x="60.3" y="790" width="1.7" height="1" fill="#5e5e5e"/><rect x="60.3" y="796" width="1.7" height="1" fill="#5e5e5e"/><rect x="60.3" y="803" width="1.7" height="1" fill="#5e5e5e"/><rect x="60.3" y="817" width="1.7" height="1" fill="#5e5e5e"/><rect x="60.3" y="824" width="1.7" height="1" fill="#5e5e5e"/><rect x="60.3" y="831" width="1.7" height="1" fill="#5e5e5e"/><rect x="60.3" y="838" width="1.7" height="1" fill="#5e5e5e"/><rect x="60.3" y="851" width="1.7" height="1" fill="#5e5e5e"/><rect x="60.3" y="858" width="1.7" height="1" fill="#5e5e5e"/><rect x="60.3" y="865" width="1.7" height="1" fill="#5e5e5e"/><rect x="60.3" y="872" width="1.7" height="1" fill="#5e5e5e"/><rect x="60.3" y="885" width="1.7" height="1" fill="#5e5e5e"/><rect x="60.3" y="892" width="1.7" height="1" fill="#5e5e5e"/></svg><div class="t" style="left:50.20px;top:109.08px;font-size:8.4px;color:#acacac;font-weight:400;-webkit-text-stroke:0.1px #acacac;">0</div><div class="a" style="left:43px;top:127px;width:19px;height:1px;background:#5b5b5b;"></div><div class="t" style="left:50.20px;top:128.05px;font-size:8.4px;color:#acacac;font-weight:400;-webkit-text-stroke:0.1px #acacac;">5</div><div class="t" style="left:50.20px;top:135.65px;font-size:8.4px;color:#acacac;font-weight:400;-webkit-text-stroke:0.1px #acacac;">0</div><div class="a" style="left:43px;top:161px;width:19px;height:1px;background:#5b5b5b;"></div><div class="t" style="left:50.20px;top:162.21px;font-size:8.4px;color:#acacac;font-weight:400;-webkit-text-stroke:0.1px #acacac;">0</div><div class="a" style="left:43px;top:195px;width:19px;height:1px;background:#5b5b5b;"></div><div class="t" style="left:50.20px;top:196.38px;font-size:8.4px;color:#acacac;font-weight:400;-webkit-text-stroke:0.1px #acacac;">5</div><div class="t" style="left:50.20px;top:203.98px;font-size:8.4px;color:#acacac;font-weight:400;-webkit-text-stroke:0.1px #acacac;">0</div><div class="a" style="left:43px;top:229px;width:19px;height:1px;background:#5b5b5b;"></div><div class="t" style="left:50.20px;top:230.55px;font-size:8.4px;color:#acacac;font-weight:400;-webkit-text-stroke:0.1px #acacac;">1</div><div class="t" style="left:50.20px;top:238.15px;font-size:8.4px;color:#acacac;font-weight:400;-webkit-text-stroke:0.1px #acacac;">0</div><div class="t" style="left:50.20px;top:245.75px;font-size:8.4px;color:#acacac;font-weight:400;-webkit-text-stroke:0.1px #acacac;">0</div><div class="a" style="left:43px;top:264px;width:19px;height:1px;background:#5b5b5b;"></div><div class="t" style="left:50.20px;top:264.71px;font-size:8.4px;color:#acacac;font-weight:400;-webkit-text-stroke:0.1px #acacac;">1</div><div class="t" style="left:50.20px;top:272.31px;font-size:8.4px;color:#acacac;font-weight:400;-webkit-text-stroke:0.1px #acacac;">5</div><div class="t" style="left:50.20px;top:279.91px;font-size:8.4px;color:#acacac;font-weight:400;-webkit-text-stroke:0.1px #acacac;">0</div><div class="a" style="left:43px;top:298px;width:19px;height:1px;background:#5b5b5b;"></div><div class="t" style="left:50.20px;top:298.88px;font-size:8.4px;color:#acacac;font-weight:400;-webkit-text-stroke:0.1px #acacac;">2</div><div class="t" style="left:50.20px;top:306.48px;font-size:8.4px;color:#acacac;font-weight:400;-webkit-text-stroke:0.1px #acacac;">0</div><div class="t" style="left:50.20px;top:314.08px;font-size:8.4px;color:#acacac;font-weight:400;-webkit-text-stroke:0.1px #acacac;">0</div><div class="a" style="left:43px;top:332px;width:19px;height:1px;background:#5b5b5b;"></div><div class="t" style="left:50.20px;top:333.05px;font-size:8.4px;color:#acacac;font-weight:400;-webkit-text-stroke:0.1px #acacac;">2</div><div class="t" style="left:50.20px;top:340.65px;font-size:8.4px;color:#acacac;font-weight:400;-webkit-text-stroke:0.1px #acacac;">5</div><div class="t" style="left:50.20px;top:348.25px;font-size:8.4px;color:#acacac;font-weight:400;-webkit-text-stroke:0.1px #acacac;">0</div><div class="a" style="left:43px;top:366px;width:19px;height:1px;background:#5b5b5b;"></div><div class="t" style="left:50.20px;top:367.21px;font-size:8.4px;color:#acacac;font-weight:400;-webkit-text-stroke:0.1px #acacac;">3</div><div class="t" style="left:50.20px;top:374.81px;font-size:8.4px;color:#acacac;font-weight:400;-webkit-text-stroke:0.1px #acacac;">0</div><div class="t" style="left:50.20px;top:382.41px;font-size:8.4px;color:#acacac;font-weight:400;-webkit-text-stroke:0.1px #acacac;">0</div><div class="a" style="left:43px;top:400px;width:19px;height:1px;background:#5b5b5b;"></div><div class="t" style="left:50.20px;top:401.38px;font-size:8.4px;color:#acacac;font-weight:400;-webkit-text-stroke:0.1px #acacac;">3</div><div class="t" style="left:50.20px;top:408.98px;font-size:8.4px;color:#acacac;font-weight:400;-webkit-text-stroke:0.1px #acacac;">5</div><div class="t" style="left:50.20px;top:416.58px;font-size:8.4px;color:#acacac;font-weight:400;-webkit-text-stroke:0.1px #acacac;">0</div><div class="a" style="left:43px;top:434px;width:19px;height:1px;background:#5b5b5b;"></div><div class="t" style="left:50.20px;top:435.55px;font-size:8.4px;color:#acacac;font-weight:400;-webkit-text-stroke:0.1px #acacac;">4</div><div class="t" style="left:50.20px;top:443.15px;font-size:8.4px;color:#acacac;font-weight:400;-webkit-text-stroke:0.1px #acacac;">0</div><div class="t" style="left:50.20px;top:450.75px;font-size:8.4px;color:#acacac;font-weight:400;-webkit-text-stroke:0.1px #acacac;">0</div><div class="a" style="left:43px;top:468px;width:19px;height:1px;background:#5b5b5b;"></div><div class="t" style="left:50.20px;top:469.71px;font-size:8.4px;color:#acacac;font-weight:400;-webkit-text-stroke:0.1px #acacac;">4</div><div class="t" style="left:50.20px;top:477.31px;font-size:8.4px;color:#acacac;font-weight:400;-webkit-text-stroke:0.1px #acacac;">5</div><div class="t" style="left:50.20px;top:484.91px;font-size:8.4px;color:#acacac;font-weight:400;-webkit-text-stroke:0.1px #acacac;">0</div><div class="a" style="left:43px;top:503px;width:19px;height:1px;background:#5b5b5b;"></div><div class="t" style="left:50.20px;top:503.88px;font-size:8.4px;color:#acacac;font-weight:400;-webkit-text-stroke:0.1px #acacac;">5</div><div class="t" style="left:50.20px;top:511.48px;font-size:8.4px;color:#acacac;font-weight:400;-webkit-text-stroke:0.1px #acacac;">0</div><div class="t" style="left:50.20px;top:519.08px;font-size:8.4px;color:#acacac;font-weight:400;-webkit-text-stroke:0.1px #acacac;">0</div><div class="a" style="left:43px;top:537px;width:19px;height:1px;background:#5b5b5b;"></div><div class="t" style="left:50.20px;top:538.05px;font-size:8.4px;color:#acacac;font-weight:400;-webkit-text-stroke:0.1px #acacac;">5</div><div class="t" style="left:50.20px;top:545.65px;font-size:8.4px;color:#acacac;font-weight:400;-webkit-text-stroke:0.1px #acacac;">5</div><div class="t" style="left:50.20px;top:553.25px;font-size:8.4px;color:#acacac;font-weight:400;-webkit-text-stroke:0.1px #acacac;">0</div><div class="a" style="left:43px;top:571px;width:19px;height:1px;background:#5b5b5b;"></div><div class="t" style="left:50.20px;top:572.21px;font-size:8.4px;color:#acacac;font-weight:400;-webkit-text-stroke:0.1px #acacac;">6</div><div class="t" style="left:50.20px;top:579.81px;font-size:8.4px;color:#acacac;font-weight:400;-webkit-text-stroke:0.1px #acacac;">0</div><div class="t" style="left:50.20px;top:587.41px;font-size:8.4px;color:#acacac;font-weight:400;-webkit-text-stroke:0.1px #acacac;">0</div><div class="a" style="left:43px;top:605px;width:19px;height:1px;background:#5b5b5b;"></div><div class="t" style="left:50.20px;top:606.38px;font-size:8.4px;color:#acacac;font-weight:400;-webkit-text-stroke:0.1px #acacac;">6</div><div class="t" style="left:50.20px;top:613.98px;font-size:8.4px;color:#acacac;font-weight:400;-webkit-text-stroke:0.1px #acacac;">5</div><div class="t" style="left:50.20px;top:621.58px;font-size:8.4px;color:#acacac;font-weight:400;-webkit-text-stroke:0.1px #acacac;">0</div><div class="a" style="left:43px;top:639px;width:19px;height:1px;background:#5b5b5b;"></div><div class="t" style="left:50.20px;top:640.55px;font-size:8.4px;color:#acacac;font-weight:400;-webkit-text-stroke:0.1px #acacac;">7</div><div class="t" style="left:50.20px;top:648.15px;font-size:8.4px;color:#acacac;font-weight:400;-webkit-text-stroke:0.1px #acacac;">0</div><div class="t" style="left:50.20px;top:655.75px;font-size:8.4px;color:#acacac;font-weight:400;-webkit-text-stroke:0.1px #acacac;">0</div><div class="a" style="left:43px;top:674px;width:19px;height:1px;background:#5b5b5b;"></div><div class="t" style="left:50.20px;top:674.71px;font-size:8.4px;color:#acacac;font-weight:400;-webkit-text-stroke:0.1px #acacac;">7</div><div class="t" style="left:50.20px;top:682.31px;font-size:8.4px;color:#acacac;font-weight:400;-webkit-text-stroke:0.1px #acacac;">5</div><div class="t" style="left:50.20px;top:689.91px;font-size:8.4px;color:#acacac;font-weight:400;-webkit-text-stroke:0.1px #acacac;">0</div><div class="a" style="left:43px;top:708px;width:19px;height:1px;background:#5b5b5b;"></div><div class="t" style="left:50.20px;top:708.88px;font-size:8.4px;color:#acacac;font-weight:400;-webkit-text-stroke:0.1px #acacac;">8</div><div class="t" style="left:50.20px;top:716.48px;font-size:8.4px;color:#acacac;font-weight:400;-webkit-text-stroke:0.1px #acacac;">0</div><div class="t" style="left:50.20px;top:724.08px;font-size:8.4px;color:#acacac;font-weight:400;-webkit-text-stroke:0.1px #acacac;">0</div><div class="a" style="left:43px;top:742px;width:19px;height:1px;background:#5b5b5b;"></div><div class="t" style="left:50.20px;top:743.05px;font-size:8.4px;color:#acacac;font-weight:400;-webkit-text-stroke:0.1px #acacac;">8</div><div class="t" style="left:50.20px;top:750.65px;font-size:8.4px;color:#acacac;font-weight:400;-webkit-text-stroke:0.1px #acacac;">5</div><div class="t" style="left:50.20px;top:758.25px;font-size:8.4px;color:#acacac;font-weight:400;-webkit-text-stroke:0.1px #acacac;">0</div><div class="a" style="left:43px;top:776px;width:19px;height:1px;background:#5b5b5b;"></div><div class="t" style="left:50.20px;top:777.21px;font-size:8.4px;color:#acacac;font-weight:400;-webkit-text-stroke:0.1px #acacac;">9</div><div class="t" style="left:50.20px;top:784.81px;font-size:8.4px;color:#acacac;font-weight:400;-webkit-text-stroke:0.1px #acacac;">0</div><div class="t" style="left:50.20px;top:792.41px;font-size:8.4px;color:#acacac;font-weight:400;-webkit-text-stroke:0.1px #acacac;">0</div><div class="a" style="left:43px;top:810px;width:19px;height:1px;background:#5b5b5b;"></div><div class="t" style="left:50.20px;top:811.38px;font-size:8.4px;color:#acacac;font-weight:400;-webkit-text-stroke:0.1px #acacac;">9</div><div class="t" style="left:50.20px;top:818.98px;font-size:8.4px;color:#acacac;font-weight:400;-webkit-text-stroke:0.1px #acacac;">5</div><div class="t" style="left:50.20px;top:826.58px;font-size:8.4px;color:#acacac;font-weight:400;-webkit-text-stroke:0.1px #acacac;">0</div><div class="a" style="left:43px;top:844px;width:19px;height:1px;background:#5b5b5b;"></div><div class="t" style="left:50.20px;top:845.55px;font-size:8.4px;color:#acacac;font-weight:400;-webkit-text-stroke:0.1px #acacac;">1</div><div class="t" style="left:50.20px;top:853.15px;font-size:8.4px;color:#acacac;font-weight:400;-webkit-text-stroke:0.1px #acacac;">0</div><div class="t" style="left:50.20px;top:860.75px;font-size:8.4px;color:#acacac;font-weight:400;-webkit-text-stroke:0.1px #acacac;">0</div><div class="t" style="left:50.20px;top:868.35px;font-size:8.4px;color:#acacac;font-weight:400;-webkit-text-stroke:0.1px #acacac;">0</div><div class="a" style="left:43px;top:878px;width:19px;height:1px;background:#5b5b5b;"></div><div class="t" style="left:50.20px;top:879.71px;font-size:8.4px;color:#acacac;font-weight:400;-webkit-text-stroke:0.1px #acacac;">1</div><div class="t" style="left:50.20px;top:887.31px;font-size:8.4px;color:#acacac;font-weight:400;-webkit-text-stroke:0.1px #acacac;">0</div><div class="a" style="left:43px;top:90px;width:19px;height:20px;background:#4a4a4a;"></div><div class="a" style="left:43px;top:104px;width:19px;height:1px;background:#565656;"></div><div class="a" style="left:57px;top:90px;width:1px;height:20px;background:#565656;"></div><div class="a" style="left:109.45px;top:110px;width:1.5px;height:785px;background:#45eef2"></div><div class="a" style="left:225.62px;top:110px;width:1.5px;height:785px;background:#45eef2"></div><div class="a" style="left:239.28px;top:110px;width:1.5px;height:785px;background:#45eef2"></div><div class="a" style="left:355.45px;top:110px;width:1.5px;height:785px;background:#45eef2"></div><div class="a" style="left:369.12px;top:110px;width:1.5px;height:785px;background:#45eef2"></div><div class="a" style="left:451.12px;top:110px;width:1.5px;height:785px;background:#45eef2"></div><div class="a" style="left:485.28px;top:110px;width:1.5px;height:785px;background:#45eef2"></div><div class="a" style="left:498.95px;top:110px;width:1.5px;height:785px;background:#45eef2"></div><div class="a" style="left:615.12px;top:110px;width:1.5px;height:785px;background:#45eef2"></div><div class="a" style="left:628.78px;top:110px;width:1.5px;height:785px;background:#45eef2"></div><div class="a" style="left:744.95px;top:110px;width:1.5px;height:785px;background:#45eef2"></div><div class="a" style="left:758.62px;top:110px;width:1.5px;height:785px;background:#45eef2"></div><div class="a" style="left:874.78px;top:110px;width:1.5px;height:785px;background:#45eef2"></div><div class="a" style="left:888.45px;top:110px;width:1.5px;height:785px;background:#45eef2"></div><div class="a" style="left:1004.62px;top:110px;width:1.5px;height:785px;background:#45eef2"></div><div class="a" style="left:1018.28px;top:110px;width:1.5px;height:785px;background:#45eef2"></div><div class="a" style="left:1134.45px;top:110px;width:1.5px;height:785px;background:#45eef2"></div><div class="a" style="left:62px;top:399.2px;width:1120px;height:2px;background:#1c1cf0;"></div><div class="a" style="left:1182px;top:90px;width:17px;height:805px;background:#4b4b4b;"></div><div class="a" style="left:1185.5px;top:335px;width:10px;height:306px;background:#6b6b6b;border-radius:5px;"></div><div class="a" style="left:43px;top:895px;width:1156px;height:17px;background:#4b4b4b;"></div><div class="a" style="left:104px;top:895px;width:192px;height:17px;background:#545454;"></div><div class="t" style="left:53.80px;top:898.39px;font-size:10.3px;color:#e8e8e8;font-weight:400;-webkit-text-stroke:0.35px #e8e8e8;">131,12%</div><div class="t" style="left:127.00px;top:898.28px;font-size:11.2px;color:#dddddd;font-weight:400;-webkit-text-stroke:0.35px #dddddd;">1500 px x 1000 px (72 ppi)</div><svg style="left:285px;top:898px;" width="7" height="11" viewBox="0 0 7 11"><path d="M1.5 1 L5.5 5.5 L1.5 10" stroke="#d0d0d0" stroke-width="1.2" fill="none"/></svg><div class="a" style="left:575px;top:897.5px;width:322.5px;height:11px;background:#6a6a6a;border-radius:5.5px;"></div><div class="a" style="left:1199px;top:60px;width:3px;height:852px;background:#3a3a3a;"></div><div class="a" style="left:1202px;top:60px;width:39px;height:12px;background:#434343;"></div><svg style="left:1227px;top:63px;" width="9" height="7" viewBox="0 0 9 7"><path d="M3.3 0.8 L0.8 3.5 L3.3 6.2 M7.3 0.8 L4.8 3.5 L7.3 6.2" fill="none" stroke="#e8e8e8" stroke-width="1.5"/></svg><div class="a" style="left:1241px;top:60px;width:3px;height:852px;background:#3a3a3a;"></div><div class="a" style="left:1202px;top:114.5px;width:39px;height:1.5px;background:#3d3d3d;"></div><div class="a" style="left:1202px;top:187px;width:39px;height:1.5px;background:#3d3d3d;"></div><div class="a" style="left:1202px;top:229.3px;width:39px;height:1.5px;background:#3d3d3d;"></div><div class="a" style="left:1202px;top:300.5px;width:39px;height:1.5px;background:#3d3d3d;"></div><div class="a" style="left:1202px;top:373.3px;width:39px;height:1.5px;background:#3d3d3d;"></div><div class="a" style="left:1202px;top:416.3px;width:39px;height:1.5px;background:#3d3d3d;"></div><div class="a" style="left:1202px;top:458.5px;width:39px;height:1.5px;background:#3d3d3d;"></div><div class="a" style="left:1202px;top:501.2px;width:39px;height:1.5px;background:#3d3d3d;"></div><svg style="left:0;top:0" width="1500" height="914" viewBox="0 0 1500 914"><g fill="#464646"><rect x="1212" y="76" width="1" height="3"/><rect x="1214" y="76" width="1" height="3"/><rect x="1216" y="76" width="1" height="3"/><rect x="1218" y="76" width="1" height="3"/><rect x="1220" y="76" width="1" height="3"/><rect x="1222" y="76" width="1" height="3"/><rect x="1224" y="76" width="1" height="3"/><rect x="1226" y="76" width="1" height="3"/><rect x="1228" y="76" width="1" height="3"/><rect x="1230" y="76" width="1" height="3"/></g><g fill="#464646"><rect x="1212" y="120" width="1" height="3"/><rect x="1214" y="120" width="1" height="3"/><rect x="1216" y="120" width="1" height="3"/><rect x="1218" y="120" width="1" height="3"/><rect x="1220" y="120" width="1" height="3"/><rect x="1222" y="120" width="1" height="3"/><rect x="1224" y="120" width="1" height="3"/><rect x="1226" y="120" width="1" height="3"/><rect x="1228" y="120" width="1" height="3"/><rect x="1230" y="120" width="1" height="3"/></g><g fill="#464646"><rect x="1212" y="192" width="1" height="3"/><rect x="1214" y="192" width="1" height="3"/><rect x="1216" y="192" width="1" height="3"/><rect x="1218" y="192" width="1" height="3"/><rect x="1220" y="192" width="1" height="3"/><rect x="1222" y="192" width="1" height="3"/><rect x="1224" y="192" width="1" height="3"/><rect x="1226" y="192" width="1" height="3"/><rect x="1228" y="192" width="1" height="3"/><rect x="1230" y="192" width="1" height="3"/></g><g fill="#464646"><rect x="1212" y="233" width="1" height="3"/><rect x="1214" y="233" width="1" height="3"/><rect x="1216" y="233" width="1" height="3"/><rect x="1218" y="233" width="1" height="3"/><rect x="1220" y="233" width="1" height="3"/><rect x="1222" y="233" width="1" height="3"/><rect x="1224" y="233" width="1" height="3"/><rect x="1226" y="233" width="1" height="3"/><rect x="1228" y="233" width="1" height="3"/><rect x="1230" y="233" width="1" height="3"/></g><g fill="#464646"><rect x="1212" y="304" width="1" height="3"/><rect x="1214" y="304" width="1" height="3"/><rect x="1216" y="304" width="1" height="3"/><rect x="1218" y="304" width="1" height="3"/><rect x="1220" y="304" width="1" height="3"/><rect x="1222" y="304" width="1" height="3"/><rect x="1224" y="304" width="1" height="3"/><rect x="1226" y="304" width="1" height="3"/><rect x="1228" y="304" width="1" height="3"/><rect x="1230" y="304" width="1" height="3"/></g><g fill="#464646"><rect x="1212" y="377" width="1" height="3"/><rect x="1214" y="377" width="1" height="3"/><rect x="1216" y="377" width="1" height="3"/><rect x="1218" y="377" width="1" height="3"/><rect x="1220" y="377" width="1" height="3"/><rect x="1222" y="377" width="1" height="3"/><rect x="1224" y="377" width="1" height="3"/><rect x="1226" y="377" width="1" height="3"/><rect x="1228" y="377" width="1" height="3"/><rect x="1230" y="377" width="1" height="3"/></g><g fill="#464646"><rect x="1212" y="420" width="1" height="3"/><rect x="1214" y="420" width="1" height="3"/><rect x="1216" y="420" width="1" height="3"/><rect x="1218" y="420" width="1" height="3"/><rect x="1220" y="420" width="1" height="3"/><rect x="1222" y="420" width="1" height="3"/><rect x="1224" y="420" width="1" height="3"/><rect x="1226" y="420" width="1" height="3"/><rect x="1228" y="420" width="1" height="3"/><rect x="1230" y="420" width="1" height="3"/></g><g fill="#464646"><rect x="1212" y="462" width="1" height="3"/><rect x="1214" y="462" width="1" height="3"/><rect x="1216" y="462" width="1" height="3"/><rect x="1218" y="462" width="1" height="3"/><rect x="1220" y="462" width="1" height="3"/><rect x="1222" y="462" width="1" height="3"/><rect x="1224" y="462" width="1" height="3"/><rect x="1226" y="462" width="1" height="3"/><rect x="1228" y="462" width="1" height="3"/><rect x="1230" y="462" width="1" height="3"/></g><path d="M1215 89.3 L1229.2 96.6 L1215 103.9 Z" fill="#dedede"/><circle cx="1212.5" cy="131.8" r="1.1" fill="#dedede"/><rect x="1214.8" y="131.20000000000002" width="3.8" height="1.2" fill="#dedede"/><circle cx="1212.5" cy="135.10000000000002" r="1.1" fill="#dedede"/><rect x="1214.8" y="134.50000000000003" width="3.8" height="1.2" fill="#dedede"/><circle cx="1212.5" cy="138.4" r="1.1" fill="#dedede"/><rect x="1214.8" y="137.8" width="3.8" height="1.2" fill="#dedede"/><path d="M1232 132.6 Q1233.2 132.8 1232.9 134 L1225.5 144.5 L1222.8 142.3 Z" fill="#dedede"/><path d="M1222.2 143 Q1217.3 143.6 1217 147 Q1216.7 148.4 1215 149 Q1221.8 150 1224.8 145.6 Z" fill="#dedede"/><path d="M1210 164.5 Q1213 161 1216.5 161.2 Q1219.5 161.5 1219.5 164.5 Q1219.5 167.8 1216.5 168 Q1213 168 1210 164.5 Z" fill="#dedede"/><rect x="1221" y="163.6" width="10.5" height="2" fill="#dedede"/><rect x="1212" y="171.5" width="10.5" height="2" fill="#dedede"/><path d="M1223.5 172.5 L1229.5 167.5 Q1232 172.5 1229.5 177.8 Z" fill="#dedede"/><circle cx="1212.5" cy="203.3" r="1.1" fill="#dedede"/><rect x="1214.8" y="202.70000000000002" width="3.8" height="1.2" fill="#dedede"/><circle cx="1212.5" cy="206.60000000000002" r="1.1" fill="#dedede"/><rect x="1214.8" y="206.00000000000003" width="3.8" height="1.2" fill="#dedede"/><circle cx="1212.5" cy="209.9" r="1.1" fill="#dedede"/><rect x="1214.8" y="209.3" width="3.8" height="1.2" fill="#dedede"/><circle cx="1224.3" cy="206.5" r="3.2" fill="#dedede"/><rect x="1223" y="208.5" width="2.6" height="3.8" fill="#dedede"/><rect x="1217.5" y="212" width="13.5" height="4" rx="0.8" fill="#dedede"/><rect x="1217.5" y="217.3" width="13.5" height="1.7" fill="#dedede"/><text x="1212" y="262" font-family="Liberation Sans" font-size="19" fill="#dedede" stroke="#dedede" stroke-width="0.5">A</text><rect x="1227.5" y="244" width="1.3" height="19" fill="#dedede"/><path d="M1220.5 276 L1228 276 L1228 291.6 L1226 291.6 L1226 277.8 L1224.3 277.8 L1224.3 291.6 L1222.3 291.6 L1222.3 284 Q1216 284 1216 280 Q1216 276 1220.5 276 Z" fill="#dedede"/><path d="M1223.5 316.5 L1230 316.5 L1230 330 L1228.3 330 L1228.3 318 L1226.8 318 L1226.8 330 L1225 330 L1225 323.5 Q1219.5 323.5 1219.5 320 Q1219.5 316.5 1223.5 316.5 Z" fill="#dedede"/><rect x="1211.5" y="324.5" width="6" height="6" fill="none" stroke="#dedede" stroke-width="1.2"/><rect x="1214.5" y="327.5" width="6" height="6" fill="#dedede"/><text x="1219" y="360" font-family="Liberation Sans" font-size="17" fill="#dedede">A</text><rect x="1211.5" y="354.5" width="6" height="6" fill="none" stroke="#dedede" stroke-width="1.2"/><rect x="1214.5" y="357.5" width="6" height="6" fill="#dedede"/><path d="M1222 389 L1229.8 393.5 L1229.8 402.5 L1222 407 L1214.2 402.5 L1214.2 393.5 Z" fill="none" stroke="#dedede" stroke-width="1.5" stroke-linejoin="round"/><path d="M1214.2 393.5 L1222 398 L1229.8 393.5 M1222 398 L1222 407" fill="none" stroke="#dedede" stroke-width="1.5"/><path d="M1222 398 L1229.8 393.5 L1229.8 402.5 L1222 407 Z" fill="#7a7a7a"/><rect x="1213.3" y="432.8" width="16.8" height="14" fill="#dedede"/><g stroke="#2e2e2e" stroke-width="1.7" stroke-dasharray="2.2 1"><path d="M1214 437.6 H1229.5 M1214 442.4 H1229.5"/><path d="M1218.8 433.5 V446.5 M1224.6 433.5 V446.5"/></g><g fill="none" stroke="#dedede" stroke-linecap="round"><path d="M1214.5 491 Q1216.5 491.5 1219 488 Q1222 483 1224 478.5 Q1225.5 475 1227 474.6" stroke-width="2"/><path d="M1227 474.6 L1228.3 489.5 Q1228.6 491.2 1231.2 491" stroke-width="2.4"/><path d="M1219.3 485.6 L1227.8 485.6" stroke-width="1.3"/><path d="M1221.5 477.5 Q1217.3 477 1217.8 479.5 Q1218.3 481 1220 480.5" stroke-width="1.2"/></g></svg><div class="a" style="left:1244px;top:60px;width:256px;height:12px;background:#434343;"></div><svg style="left:1485px;top:63px;" width="9" height="7" viewBox="0 0 9 7"><path d="M0.8 0.8 L3.3 3.5 L0.8 6.2 M4.8 0.8 L7.3 3.5 L4.8 6.2" fill="none" stroke="#e8e8e8" stroke-width="1.5"/></svg><div class="a" style="left:1244px;top:72px;width:256px;height:30px;background:#474747;"></div><div class="a" style="left:1386px;top:72px;width:73px;height:30px;background:#535353;"></div><div class="a" style="left:1279.5px;top:74px;width:1px;height:28px;background:#3f3f3f;"></div><div class="a" style="left:1244px;top:72px;width:35.5px;height:30px;overflow:hidden"><div class="t" style="left:9px;top:9.71px;font-size:11px;font-weight:700;color:#d0d0d0;-webkit-text-stroke:0.12px #d0d0d0">Libraries</div></div><div class="a" style="left:1314.7px;top:74px;width:1px;height:28px;background:#3f3f3f;"></div><div class="a" style="left:1280.5px;top:72px;width:34.200000000000045px;height:30px;overflow:hidden"><div class="t" style="left:8.0px;top:9.71px;font-size:11px;font-weight:700;color:#d0d0d0;-webkit-text-stroke:0.12px #d0d0d0">History</div></div><div class="a" style="left:1349.4px;top:74px;width:1px;height:28px;background:#3f3f3f;"></div><div class="a" style="left:1315.7px;top:72px;width:33.700000000000045px;height:30px;overflow:hidden"><div class="t" style="left:8.599999999999909px;top:9.71px;font-size:11px;font-weight:700;color:#d0d0d0;-webkit-text-stroke:0.12px #d0d0d0">Navigator</div></div><div class="a" style="left:1385px;top:74px;width:1px;height:28px;background:#3f3f3f;"></div><div class="a" style="left:1350.4px;top:72px;width:34.59999999999991px;height:30px;overflow:hidden"><div class="t" style="left:8.599999999999909px;top:9.71px;font-size:11px;font-weight:700;color:#d0d0d0;-webkit-text-stroke:0.12px #d0d0d0">Adjustments</div></div><div class="t" style="left:1395.00px;top:81.71px;font-size:11px;color:#f2f2f2;font-weight:700;-webkit-text-stroke:0.12px #f2f2f2;">Properties</div><div class="a" style="left:1483px;top:83px;width:11px;height:8px;background:repeating-linear-gradient(#a8a8a8 0 1px,transparent 1px 2px)"></div><div class="a" style="left:1255.5px;top:108.5px;width:22px;height:22.5px;background:#3c3c3c;border-radius:2px;"></div><svg style="left:1260px;top:112px;" width="13" height="16" viewBox="0 0 13 16"><path d="M1 1 H8 L12 5 V15 H1 Z" stroke="#e0e0e0" stroke-width="1.2" fill="none"/><path d="M8 1 V5 H12" stroke="#e0e0e0" stroke-width="1.2" fill="none"/></svg><div class="t" style="left:1284.00px;top:115.31px;font-size:11px;color:#e8e8e8;font-weight:400;-webkit-text-stroke:0.35px #e8e8e8;">Document</div><div class="a" style="left:1244px;top:136px;width:256px;height:1.2px;background:#3f3f3f;"></div><svg style="left:1250px;top:150px;" width="10" height="7" viewBox="0 0 10 7"><path d="M1 1 L5 5 L9 1" stroke="#c8c8c8" stroke-width="1.3" fill="none"/></svg><div class="t" style="left:1265.60px;top:148.41px;font-size:11px;color:#f0f0f0;font-weight:700;-webkit-text-stroke:0.12px #f0f0f0;">Canvas</div><div class="t" style="left:1296.00px;top:172.71px;font-size:11px;color:#d8d8d8;font-weight:400;-webkit-text-stroke:0.35px #d8d8d8;">W</div><div class="a" style="left:1311px;top:169.7px;width:54.6px;height:15.6px;background:#3f3f3f;border:1px solid #4a4a4a;"></div><div class="t" style="left:1315.00px;top:172.71px;font-size:11px;color:#f0f0f0;font-weight:400;-webkit-text-stroke:0.35px #f0f0f0;">1500 px</div><div class="t" style="left:1380.00px;top:172.71px;font-size:11px;color:#d8d8d8;font-weight:400;-webkit-text-stroke:0.35px #d8d8d8;">X</div><div class="a" style="left:1393.4px;top:169.7px;width:54.2px;height:15.6px;background:#505050;border:1px solid #4b4b4b;"></div><div class="t" style="left:1396.50px;top:172.71px;font-size:11px;color:#6a6a6a;font-weight:400;-webkit-text-stroke:0.35px #6a6a6a;">0 px</div><div class="t" style="left:1297.50px;top:197.41px;font-size:11px;color:#d8d8d8;font-weight:400;-webkit-text-stroke:0.35px #d8d8d8;">H</div><div class="a" style="left:1311px;top:194.8px;width:54.6px;height:15.6px;background:#3f3f3f;border:1px solid #4a4a4a;"></div><div class="t" style="left:1315.00px;top:197.41px;font-size:11px;color:#f0f0f0;font-weight:400;-webkit-text-stroke:0.35px #f0f0f0;">1000 px</div><div class="t" style="left:1380.00px;top:197.41px;font-size:11px;color:#d8d8d8;font-weight:400;-webkit-text-stroke:0.35px #d8d8d8;">Y</div><div class="a" style="left:1393.4px;top:194.8px;width:54.2px;height:15.6px;background:#505050;border:1px solid #4b4b4b;"></div><div class="t" style="left:1396.50px;top:197.41px;font-size:11px;color:#6a6a6a;font-weight:400;-webkit-text-stroke:0.35px #6a6a6a;">0 px</div><div class="t" style="left:1311.50px;top:260.68px;font-size:11.2px;color:#dadada;font-weight:400;-webkit-text-stroke:0.35px #dadada;">Resolution: 72 pixels/inch</div><svg style="left:0px;top:0px;" width="1500" height="914" viewBox="0 0 1500 914"><g fill="none" stroke="#e6e6e6" stroke-width="1.5"><rect x="1264.6" y="182.8" width="6.8" height="8" rx="3.4"/><rect x="1264.6" y="189.2" width="6.8" height="8" rx="3.4"/></g><rect x="1267.3" y="186.5" width="1.5" height="7" fill="#e6e6e6"/><rect x="1339.9" y="223.1" width="24.5" height="25" rx="2" fill="#393939"/><rect x="1317.8" y="227.6" width="14.3" height="16" fill="none" stroke="#e6e6e6" stroke-width="1.3"/><circle cx="1324.9" cy="231.9" r="1.9" fill="#e6e6e6"/><path d="M1321 242.8 L1321 237 Q1321 235.3 1322.7 235.3 L1327 235.3 Q1328.7 235.3 1328.7 237 L1328.7 242.8 Z" fill="#e6e6e6"/><rect x="1344.4" y="229.4" width="15.5" height="12.5" fill="none" stroke="#e6e6e6" stroke-width="1.3"/><circle cx="1352.1" cy="233.3" r="1.9" fill="#e6e6e6"/><path d="M1347.9 241.6 L1347.9 238 Q1347.9 236.3 1349.6 236.3 L1354.3 236.3 Q1356 236.3 1356 238 L1356 241.6 Z" fill="#e6e6e6"/></svg><div class="t" style="left:1277.30px;top:288.41px;font-size:11px;color:#cfcfcf;font-weight:400;-webkit-text-stroke:0.35px #cfcfcf;">Mode</div><div class="a" style="left:1311.7px;top:284px;width:135.8px;height:18.5px;background:#444444;border:1px solid #5b5b5b;border-radius:3px;"></div><div class="t" style="left:1319.40px;top:288.41px;font-size:11px;color:#ececec;font-weight:400;-webkit-text-stroke:0.35px #ececec;">RGB Color</div><svg style="left:1434.5px;top:291.25px;" width="9" height="6" viewBox="0 0 9 6"><path d="M1 1 L4.5 4.5 L8 1" stroke="#dcdcdc" stroke-width="1.3" fill="none"/></svg><div class="a" style="left:1311.7px;top:311.4px;width:135.8px;height:18px;background:#444444;border:1px solid #5b5b5b;border-radius:3px;"></div><div class="t" style="left:1319.40px;top:315.11px;font-size:11px;color:#ececec;font-weight:400;-webkit-text-stroke:0.35px #ececec;">8 Bits/Channel</div><svg style="left:1434.5px;top:318.4px;" width="9" height="6" viewBox="0 0 9 6"><path d="M1 1 L4.5 4.5 L8 1" stroke="#dcdcdc" stroke-width="1.3" fill="none"/></svg><div class="t" style="left:1291.80px;top:345.41px;font-size:11px;color:#cfcfcf;font-weight:400;-webkit-text-stroke:0.35px #cfcfcf;">Fill</div><div class="a" style="left:1311.7px;top:341.5px;width:17.3px;height:18px;background:#ffffff;border:1px solid #3d3d3d;"></div><div class="a" style="left:1334.6px;top:341px;width:112.9px;height:19px;background:#444444;border:1px solid #5b5b5b;border-radius:3px;"></div><div class="t" style="left:1342.00px;top:345.21px;font-size:11px;color:#ececec;font-weight:400;-webkit-text-stroke:0.35px #ececec;">White</div><svg style="left:1434.5px;top:348.5px;" width="9" height="6" viewBox="0 0 9 6"><path d="M1 1 L4.5 4.5 L8 1" stroke="#dcdcdc" stroke-width="1.3" fill="none"/></svg><div class="a" style="left:1244px;top:370.8px;width:239px;height:1.2px;background:#474747;"></div><svg style="left:1250px;top:384px;" width="10" height="7" viewBox="0 0 10 7"><path d="M1 1 L5 5 L9 1" stroke="#c8c8c8" stroke-width="1.3" fill="none"/></svg><div class="t" style="left:1265.00px;top:383.11px;font-size:11px;color:#f0f0f0;font-weight:700;-webkit-text-stroke:0.12px #f0f0f0;">Rulers &amp; Grids</div><div class="a" style="left:1483.5px;top:137px;width:15px;height:259px;background:#4c4c4c;"></div><div class="a" style="left:1486.7px;top:141px;width:9.7px;height:139px;background:#5e5e5e;border-radius:5px;"></div><div class="a" style="left:1498.7px;top:60px;width:1.3px;height:852px;background:#3c3c3c;"></div><div class="a" style="left:1244px;top:422.8px;width:256px;height:1.8px;background:#3a3a3a;"></div><div class="a" style="left:1244px;top:424.5px;width:256px;height:30px;background:#474747;"></div><div class="a" style="left:1244px;top:424.5px;width:58px;height:30px;background:#535353;"></div><div class="a" style="left:1350px;top:426px;width:1px;height:28px;background:#3f3f3f;"></div><div class="a" style="left:1413px;top:426px;width:1px;height:28px;background:#3f3f3f;"></div><div class="a" style="left:1458.5px;top:426px;width:1px;height:28px;background:#3f3f3f;"></div><div class="t" style="left:1253.20px;top:434.11px;font-size:11px;color:#f2f2f2;font-weight:700;-webkit-text-stroke:0.12px #f2f2f2;">History</div><div class="t" style="left:1311.60px;top:434.11px;font-size:11px;color:#cfcfcf;font-weight:700;-webkit-text-stroke:0.12px #cfcfcf;">Layers</div><div class="t" style="left:1360.50px;top:434.11px;font-size:11px;color:#cfcfcf;font-weight:700;-webkit-text-stroke:0.12px #cfcfcf;">Channels</div><div class="t" style="left:1423.00px;top:434.11px;font-size:11px;color:#cfcfcf;font-weight:700;-webkit-text-stroke:0.12px #cfcfcf;">Paths</div><div class="a" style="left:1483px;top:436.6px;width:11px;height:8px;background:repeating-linear-gradient(#a8a8a8 0 1px,transparent 1px 2px)"></div><div class="a" style="left:1244px;top:455px;width:256px;height:431px;background:#4b4b4b;"></div><div class="a" style="left:1244px;top:455px;width:239px;height:182px;background:#535353;"></div><div class="a" style="left:1269.5px;top:463px;width:33.5px;height:23px;background:#ffffff;border:1px solid #2e2e2e;border-radius:2px;"></div><div class="t" style="left:1307.40px;top:468.01px;font-size:11px;color:#ececec;font-weight:400;-webkit-text-stroke:0.35px #ececec;">Untitled-1</div><div class="a" style="left:1244px;top:490px;width:239px;height:1.3px;background:#6a6a6a;"></div><div class="a" style="left:1244px;top:514.9px;width:239px;height:0.9px;background:#4a4a4a;"></div><div class="a" style="left:1250px;top:497.1px;width:12px;height:12px;background:transparent;border:1px solid #4c4c4c;border-radius:1px;"></div><div class="t" style="left:1303.50px;top:497.71px;font-size:11px;color:#ececec;font-weight:400;-webkit-text-stroke:0.35px #ececec;">New</div><svg style="left:1276.9px;top:496.40000000000003px;" width="15.2" height="16.5" viewBox="0 0 15.2 16.5"><path d="M0.8 0.8 L10.3 0.8 L11.3 2 L14.4 2 L14.4 15.7 L0.8 15.7 Z" fill="#4a4a4a" stroke="#e8e8e8" stroke-width="1.4"/><rect x="1.5" y="1.2" width="9" height="2" fill="#e8e8e8"/><rect x="2.4" y="4.2" width="10.4" height="1.1" fill="#e8e8e8"/><rect x="2.4" y="6.4" width="10.4" height="1.1" fill="#e8e8e8"/><rect x="2.4" y="8.6" width="10.4" height="1.1" fill="#e8e8e8"/><rect x="2.4" y="10.8" width="10.4" height="1.1" fill="#e8e8e8"/><rect x="2.4" y="13.0" width="10.4" height="1.1" fill="#e8e8e8"/></svg><div class="a" style="left:1244px;top:538.97px;width:239px;height:0.9px;background:#4a4a4a;"></div><div class="a" style="left:1250px;top:521.1700000000001px;width:12px;height:12px;background:transparent;border:1px solid #4c4c4c;border-radius:1px;"></div><div class="t" style="left:1303.50px;top:521.78px;font-size:11px;color:#ececec;font-weight:400;-webkit-text-stroke:0.35px #ececec;">New Guide</div><svg style="left:1276.9px;top:520.47px;" width="15.2" height="16.5" viewBox="0 0 15.2 16.5"><path d="M0.8 0.8 L10.3 0.8 L11.3 2 L14.4 2 L14.4 15.7 L0.8 15.7 Z" fill="#4a4a4a" stroke="#e8e8e8" stroke-width="1.4"/><rect x="1.5" y="1.2" width="9" height="2" fill="#e8e8e8"/><rect x="2.4" y="4.2" width="10.4" height="1.1" fill="#e8e8e8"/><rect x="2.4" y="6.4" width="10.4" height="1.1" fill="#e8e8e8"/><rect x="2.4" y="8.6" width="10.4" height="1.1" fill="#e8e8e8"/><rect x="2.4" y="10.8" width="10.4" height="1.1" fill="#e8e8e8"/><rect x="2.4" y="13.0" width="10.4" height="1.1" fill="#e8e8e8"/></svg><div class="a" style="left:1244px;top:563.04px;width:239px;height:0.9px;background:#4a4a4a;"></div><div class="a" style="left:1250px;top:545.24px;width:12px;height:12px;background:transparent;border:1px solid #4c4c4c;border-radius:1px;"></div><div class="t" style="left:1303.50px;top:545.85px;font-size:11px;color:#ececec;font-weight:400;-webkit-text-stroke:0.35px #ececec;">New Guide</div><svg style="left:1276.9px;top:544.54px;" width="15.2" height="16.5" viewBox="0 0 15.2 16.5"><path d="M0.8 0.8 L10.3 0.8 L11.3 2 L14.4 2 L14.4 15.7 L0.8 15.7 Z" fill="#4a4a4a" stroke="#e8e8e8" stroke-width="1.4"/><rect x="1.5" y="1.2" width="9" height="2" fill="#e8e8e8"/><rect x="2.4" y="4.2" width="10.4" height="1.1" fill="#e8e8e8"/><rect x="2.4" y="6.4" width="10.4" height="1.1" fill="#e8e8e8"/><rect x="2.4" y="8.6" width="10.4" height="1.1" fill="#e8e8e8"/><rect x="2.4" y="10.8" width="10.4" height="1.1" fill="#e8e8e8"/><rect x="2.4" y="13.0" width="10.4" height="1.1" fill="#e8e8e8"/></svg><div class="a" style="left:1244px;top:587.11px;width:239px;height:0.9px;background:#4a4a4a;"></div><div class="a" style="left:1250px;top:569.3100000000001px;width:12px;height:12px;background:transparent;border:1px solid #4c4c4c;border-radius:1px;"></div><div class="t" style="left:1303.50px;top:569.92px;font-size:11px;color:#ececec;font-weight:400;-webkit-text-stroke:0.35px #ececec;">Clear All Guides</div><svg style="left:1276.9px;top:568.61px;" width="15.2" height="16.5" viewBox="0 0 15.2 16.5"><path d="M0.8 0.8 L10.3 0.8 L11.3 2 L14.4 2 L14.4 15.7 L0.8 15.7 Z" fill="#4a4a4a" stroke="#e8e8e8" stroke-width="1.4"/><rect x="1.5" y="1.2" width="9" height="2" fill="#e8e8e8"/><rect x="2.4" y="4.2" width="10.4" height="1.1" fill="#e8e8e8"/><rect x="2.4" y="6.4" width="10.4" height="1.1" fill="#e8e8e8"/><rect x="2.4" y="8.6" width="10.4" height="1.1" fill="#e8e8e8"/><rect x="2.4" y="10.8" width="10.4" height="1.1" fill="#e8e8e8"/><rect x="2.4" y="13.0" width="10.4" height="1.1" fill="#e8e8e8"/></svg><div class="a" style="left:1244px;top:611.18px;width:239px;height:0.9px;background:#4a4a4a;"></div><div class="a" style="left:1250px;top:593.38px;width:12px;height:12px;background:transparent;border:1px solid #4c4c4c;border-radius:1px;"></div><div class="t" style="left:1303.50px;top:593.99px;font-size:11px;color:#ececec;font-weight:400;-webkit-text-stroke:0.35px #ececec;">New Guide</div><svg style="left:1276.9px;top:592.68px;" width="15.2" height="16.5" viewBox="0 0 15.2 16.5"><path d="M0.8 0.8 L10.3 0.8 L11.3 2 L14.4 2 L14.4 15.7 L0.8 15.7 Z" fill="#4a4a4a" stroke="#e8e8e8" stroke-width="1.4"/><rect x="1.5" y="1.2" width="9" height="2" fill="#e8e8e8"/><rect x="2.4" y="4.2" width="10.4" height="1.1" fill="#e8e8e8"/><rect x="2.4" y="6.4" width="10.4" height="1.1" fill="#e8e8e8"/><rect x="2.4" y="8.6" width="10.4" height="1.1" fill="#e8e8e8"/><rect x="2.4" y="10.8" width="10.4" height="1.1" fill="#e8e8e8"/><rect x="2.4" y="13.0" width="10.4" height="1.1" fill="#e8e8e8"/></svg><div class="a" style="left:1244px;top:612.75px;width:239px;height:23.5px;background:#6a6a6a;"></div><div class="a" style="left:1250px;top:617.45px;width:12px;height:12px;background:transparent;border:1px solid #4c4c4c;border-radius:1px;"></div><div class="t" style="left:1303.50px;top:618.06px;font-size:11px;color:#ececec;font-weight:400;-webkit-text-stroke:0.35px #ececec;">New Guide</div><svg style="left:1276.9px;top:616.75px;" width="15.2" height="16.5" viewBox="0 0 15.2 16.5"><path d="M0.8 0.8 L10.3 0.8 L11.3 2 L14.4 2 L14.4 15.7 L0.8 15.7 Z" fill="#4a4a4a" stroke="#e8e8e8" stroke-width="1.4"/><rect x="1.5" y="1.2" width="9" height="2" fill="#e8e8e8"/><rect x="2.4" y="4.2" width="10.4" height="1.1" fill="#e8e8e8"/><rect x="2.4" y="6.4" width="10.4" height="1.1" fill="#e8e8e8"/><rect x="2.4" y="8.6" width="10.4" height="1.1" fill="#e8e8e8"/><rect x="2.4" y="10.8" width="10.4" height="1.1" fill="#e8e8e8"/><rect x="2.4" y="13.0" width="10.4" height="1.1" fill="#e8e8e8"/></svg><div class="a" style="left:1244px;top:885.5px;width:256px;height:1px;background:#404040;"></div><div class="a" style="left:1244px;top:886.5px;width:256px;height:25px;background:#535353;"></div><div class="a" style="left:1498.8px;top:455px;width:1.2px;height:457px;background:#3c3c3c;"></div><svg style="left:0px;top:0px;" width="1500" height="914" viewBox="0 0 1500 914"><path d="M1262.3 467.6 Q1263.6 467.8 1263.2 469 L1257.4 477.6 L1254.9 475.6 Z" fill="#e6e6e6"/><path d="M1254.4 476.2 Q1250.3 476.8 1250.2 479.6 Q1250 480.8 1248.6 481.6 Q1254.8 482.4 1257 478.6 Z" fill="#e6e6e6"/><path d="M1248.3 472.3 L1252.3 470.3 L1251.8 474.2 Z" fill="#e6e6e6"/><path d="M1251 471.2 Q1254.5 469 1257.3 469.8" fill="none" stroke="#cfcfcf" stroke-width="1.1"/><circle cx="1262.2" cy="473.5" r="0.6" fill="#cfcfcf"/><circle cx="1261.5" cy="476.6" r="0.6" fill="#cfcfcf"/><circle cx="1259.8" cy="479.3" r="0.6" fill="#cfcfcf"/><circle cx="1258" cy="480.8" r="0.6" fill="#cfcfcf"/></svg><svg style="left:0px;top:0px;" width="1500" height="914" viewBox="0 0 1500 914"><path d="M1396.6 892.8 L1402.2 892.8 L1405.3 895.9 L1405.3 904 L1396.6 904 Z" fill="#e6e6e6"/><path d="M1402.2 892.8 L1402.2 895.9 L1405.3 895.9 Z" fill="#9a9a9a"/><path d="M1394.3 896 H1396.7 V899.5 H1400.3 V902 H1396.7 V905.6 H1394.3 V902 H1390.8 V899.5 H1394.3 Z" fill="#e6e6e6" stroke="#535353" stroke-width="1"/></svg><svg style="left:1425px;top:892px;" width="16" height="13" viewBox="0 0 16 13"><path d="M1 3.5 L4.5 3.5 L6 1 L10 1 L11.5 3.5 L15 3.5 L15 12.5 L1 12.5 Z" fill="#e6e6e6"/><circle cx="8" cy="8" r="2.8" fill="#535353"/><circle cx="8" cy="8" r="1.6" fill="#e6e6e6"/></svg><svg style="left:0px;top:0px;" width="1500" height="914" viewBox="0 0 1500 914"><path d="M1460.8 894.5 Q1460.8 892.3 1463 892.3 Q1465.2 892.3 1465.2 894.5" fill="none" stroke="#e6e6e6" stroke-width="1.2"/><rect x="1457.2" y="894.2" width="11.6" height="1.6" fill="#e6e6e6"/><path d="M1458.3 896.3 L1467.7 896.3 L1467 905 L1459 905 Z" fill="none" stroke="#e6e6e6" stroke-width="1.4"/><rect x="1460.3" y="897.5" width="5.4" height="6.5" fill="#9a9a9a"/></svg><div class="a" style="left:561.5px;top:324.2px;width:454.3px;height:427.8px;background:#535353;border-radius:10px;box-shadow:0 10px 40px rgba(0,0,0,0.40), 0 2px 8px rgba(0,0,0,0.15), 0 0 0 0.5px rgba(0,0,0,0.3);overflow:hidden"><div class="a" style="left:0;top:0;width:454.3px;height:29px;background:#d6d7d9"></div><div class="a" style="left:0;top:29px;width:454.3px;height:2.5px;background:#3f3f3f"></div></div><div class="t" style="left:730.70px;top:332.36px;font-size:14px;color:#262626;font-weight:700;-webkit-text-stroke:0.12px #262626;">New guide layout</div><div class="t" style="left:588.40px;top:369.47px;font-size:13px;color:#e8e8e8;font-weight:400;-webkit-text-stroke:0.35px #e8e8e8;">Preset:</div><div class="a" style="left:636px;top:365.7px;width:268.5px;height:21px;background:#444444;border:1.3px solid #5f5f5f;border-radius:3px;"></div><div class="t" style="left:644.00px;top:369.47px;font-size:13px;color:#f2f2f2;font-weight:400;-webkit-text-stroke:0.35px #f2f2f2;">Default</div><svg style="left:892.0px;top:374.2px;" width="9" height="6" viewBox="0 0 9 6"><path d="M1 1 L4.5 4.5 L8 1" stroke="#e0e0e0" stroke-width="1.3" fill="none"/></svg><div class="t" style="left:588.80px;top:403.87px;font-size:13px;color:#e8e8e8;font-weight:400;-webkit-text-stroke:0.35px #e8e8e8;">Target:</div><div class="a" style="left:636px;top:400.6px;width:268.5px;height:20.5px;background:#4f4f4f;border:1.3px solid #585858;border-radius:3px;"></div><div class="t" style="left:644.00px;top:404.07px;font-size:13px;color:#8a8a8a;font-weight:400;-webkit-text-stroke:0.35px #8a8a8a;">Canvas</div><svg style="left:892.0px;top:408.85px;" width="9" height="6" viewBox="0 0 9 6"><path d="M1 1 L4.5 4.5 L8 1" stroke="#6a6a6a" stroke-width="1.3" fill="none"/></svg><div class="a" style="left:573px;top:443.8px;width:331.5px;height:63px;background:transparent;border:1px solid #474747;"></div><div class="a" style="left:587px;top:442.8px;width:42px;height:3px;background:#535353;"></div><div class="t" style="left:593.00px;top:437.27px;font-size:13px;color:#f0f0f0;font-weight:400;-webkit-text-stroke:0.35px #f0f0f0;">Color</div><div class="t" style="left:594.90px;top:469.47px;font-size:13px;color:#e8e8e8;font-weight:400;-webkit-text-stroke:0.35px #e8e8e8;">Color:</div><div class="a" style="left:635.5px;top:465.5px;width:220px;height:21.5px;background:#444444;border:1.3px solid #5f5f5f;border-radius:3px;"></div><svg style="left:843.0px;top:474.25px;" width="9" height="6" viewBox="0 0 9 6"><path d="M1 1 L4.5 4.5 L8 1" stroke="#e0e0e0" stroke-width="1.3" fill="none"/></svg><div class="a" style="left:644px;top:470px;width:16.2px;height:13.8px;background:#72f4f8;"></div><div class="t" style="left:661.00px;top:469.77px;font-size:13px;color:#f2f2f2;font-weight:400;-webkit-text-stroke:0.35px #f2f2f2;">Cyan</div><div class="a" style="left:861.4px;top:459.7px;width:33px;height:33px;background:#52fbff;border:1px solid #3a3030;"></div><div class="a" style="left:921.3px;top:365.2px;width:83.4px;height:27.3px;background:#535353;border:2px solid #e2e2e2;border-radius:14px;"></div><div class="a" style="left:1005.2px;top:366px;width:1px;height:26px;background:#3e3e3e;"></div><div class="a" style="left:1005.2px;top:403px;width:1px;height:25.5px;background:#3e3e3e;"></div><div class="t" style="left:954.50px;top:372.17px;font-size:13px;color:#f4f4f4;font-weight:400;-webkit-text-stroke:0.35px #f4f4f4;">OK</div><div class="a" style="left:921.3px;top:402px;width:83.4px;height:26.8px;background:#535353;border:1.3px solid #868686;border-radius:14px;"></div><div class="t" style="left:943.00px;top:408.17px;font-size:13px;color:#f0f0f0;font-weight:400;-webkit-text-stroke:0.35px #f0f0f0;">Cancel</div><div class="a" style="left:921px;top:441.5px;width:12.4px;height:12.8px;background:#dcdcdc;border-radius:2.5px;"></div><svg style="left:922px;top:442px;" width="11" height="12" viewBox="0 0 11 12"><path d="M2.3 6.3 L4.8 9 L8.8 2.8" stroke="#1e1e1e" stroke-width="1.8" fill="none" stroke-linecap="round" stroke-linejoin="round"/></svg><div class="t" style="left:944.00px;top:440.97px;font-size:13px;color:#f0f0f0;font-weight:400;-webkit-text-stroke:0.35px #f0f0f0;">Preview</div><div class="a" style="left:573.5px;top:527px;width:160.5px;height:99px;background:transparent;border:1px solid #474747;"></div><div class="a" style="left:589px;top:526px;width:83px;height:3px;background:#535353;"></div><div class="a" style="left:592.8px;top:520.5px;width:12.7px;height:12.5px;background:#dcdcdc;border-radius:2.5px;"></div><svg style="left:593.5px;top:521px;" width="11" height="12" viewBox="0 0 11 12"><path d="M2.3 6.3 L4.8 9 L8.8 2.8" stroke="#1e1e1e" stroke-width="1.8" fill="none" stroke-linecap="round" stroke-linejoin="round"/></svg><div class="t" style="left:615.80px;top:520.47px;font-size:13px;color:#f0f0f0;font-weight:400;-webkit-text-stroke:0.35px #f0f0f0;">Columns</div><div class="t" style="left:583.60px;top:544.47px;font-size:13px;color:#e8e8e8;font-weight:400;-webkit-text-stroke:0.35px #e8e8e8;">Number</div><div class="a" style="left:635px;top:541.7px;width:61.8px;height:18.5px;background:#444444;border:1.5px solid #3f74d6;"></div><div class="a" style="left:638.7px;top:544.3px;width:8.3px;height:13.2px;background:#3b63b8;"></div><div class="t" style="left:638.80px;top:544.47px;font-size:13px;color:#f4f4f4;font-weight:400;-webkit-text-stroke:0.35px #f4f4f4;">8</div><div class="t" style="left:596.40px;top:572.67px;font-size:13px;color:#e8e8e8;font-weight:400;-webkit-text-stroke:0.35px #e8e8e8;">Width</div><div class="a" style="left:635px;top:569.8px;width:61.8px;height:18px;background:#444444;border:1px solid #5a5a5a;"></div><div class="t" style="left:592.50px;top:600.67px;font-size:13px;color:#e8e8e8;font-weight:400;-webkit-text-stroke:0.35px #e8e8e8;">Gutter</div><div class="a" style="left:635px;top:597.5px;width:61.8px;height:18.5px;background:#444444;border:1px solid #5a5a5a;"></div><div class="t" style="left:639.00px;top:600.77px;font-size:13px;color:#f2f2f2;font-weight:400;-webkit-text-stroke:0.35px #f2f2f2;">20 px</div><div class="a" style="left:744.3px;top:526.8px;width:160.7px;height:98.1px;background:transparent;border:1px solid #474747;"></div><div class="a" style="left:760px;top:525.8px;width:62px;height:3px;background:#535353;"></div><div class="a" style="left:763.5px;top:520px;width:12.8px;height:12.8px;background:#474747;border:1.3px solid #777777;border-radius:2.5px;"></div><div class="t" style="left:786.60px;top:520.47px;font-size:13px;color:#f0f0f0;font-weight:400;-webkit-text-stroke:0.35px #f0f0f0;">Rows</div><div class="t" style="left:754.20px;top:544.47px;font-size:13px;color:#8c8c8c;font-weight:400;-webkit-text-stroke:0.35px #8c8c8c;">Number</div><div class="a" style="left:806px;top:541.6px;width:61.7px;height:18.4px;background:#4c4c4c;border:1px solid #5a5a5a;"></div><div class="t" style="left:762.70px;top:572.67px;font-size:13px;color:#8c8c8c;font-weight:400;-webkit-text-stroke:0.35px #8c8c8c;">Height</div><div class="a" style="left:806px;top:569.7px;width:61.7px;height:18.4px;background:#4c4c4c;border:1px solid #5a5a5a;"></div><div class="t" style="left:763.50px;top:600.67px;font-size:13px;color:#8c8c8c;font-weight:400;-webkit-text-stroke:0.35px #8c8c8c;">Gutter</div><div class="a" style="left:806px;top:598px;width:61.7px;height:18.4px;background:#4c4c4c;border:1px solid #5a5a5a;"></div><div class="a" style="left:573.2px;top:645.6px;width:332.4px;height:67.2px;background:transparent;border:1px solid #474747;"></div><div class="a" style="left:589px;top:644.6px;width:72px;height:3px;background:#535353;"></div><div class="a" style="left:592.4px;top:639.6px;width:13.2px;height:13.2px;background:#474747;border:1.3px solid #777777;border-radius:2.5px;"></div><div class="t" style="left:615.70px;top:639.47px;font-size:13px;color:#f0f0f0;font-weight:400;-webkit-text-stroke:0.35px #f0f0f0;">Margin</div><div class="t" style="left:591.20px;top:662.07px;font-size:13px;color:#8a8a8a;font-weight:400;-webkit-text-stroke:0.35px #8a8a8a;">Top:</div><div class="a" style="left:591.2px;top:684px;width:61.8px;height:18.5px;background:#4c4c4c;border:1px solid #5a5a5a;"></div><div class="t" style="left:662.50px;top:662.07px;font-size:13px;color:#8a8a8a;font-weight:400;-webkit-text-stroke:0.35px #8a8a8a;">Left:</div><div class="a" style="left:662.5px;top:684px;width:61.8px;height:18.5px;background:#4c4c4c;border:1px solid #5a5a5a;"></div><div class="t" style="left:733.50px;top:662.07px;font-size:13px;color:#8a8a8a;font-weight:400;-webkit-text-stroke:0.35px #8a8a8a;">Bottom:</div><div class="a" style="left:733.5px;top:684px;width:61.8px;height:18.5px;background:#4c4c4c;border:1px solid #5a5a5a;"></div><div class="t" style="left:804.80px;top:662.07px;font-size:13px;color:#8a8a8a;font-weight:400;-webkit-text-stroke:0.35px #8a8a8a;">Right:</div><div class="a" style="left:804.8px;top:684px;width:61.8px;height:18.5px;background:#4c4c4c;border:1px solid #5a5a5a;"></div><div class="a" style="left:572px;top:726px;width:12.5px;height:12.5px;background:#474747;border:1.3px solid #777777;border-radius:2.5px;"></div><div class="t" style="left:594.80px;top:725.47px;font-size:13px;color:#f0f0f0;font-weight:400;-webkit-text-stroke:0.35px #f0f0f0;">Center Columns</div><div class="a" style="left:699.2px;top:726px;width:12.5px;height:12.5px;background:#474747;border:1.3px solid #777777;border-radius:2.5px;"></div><div class="t" style="left:722.50px;top:725.47px;font-size:13px;color:#f0f0f0;font-weight:400;-webkit-text-stroke:0.35px #f0f0f0;">Clear Existing Guides</div>
</body></html>
